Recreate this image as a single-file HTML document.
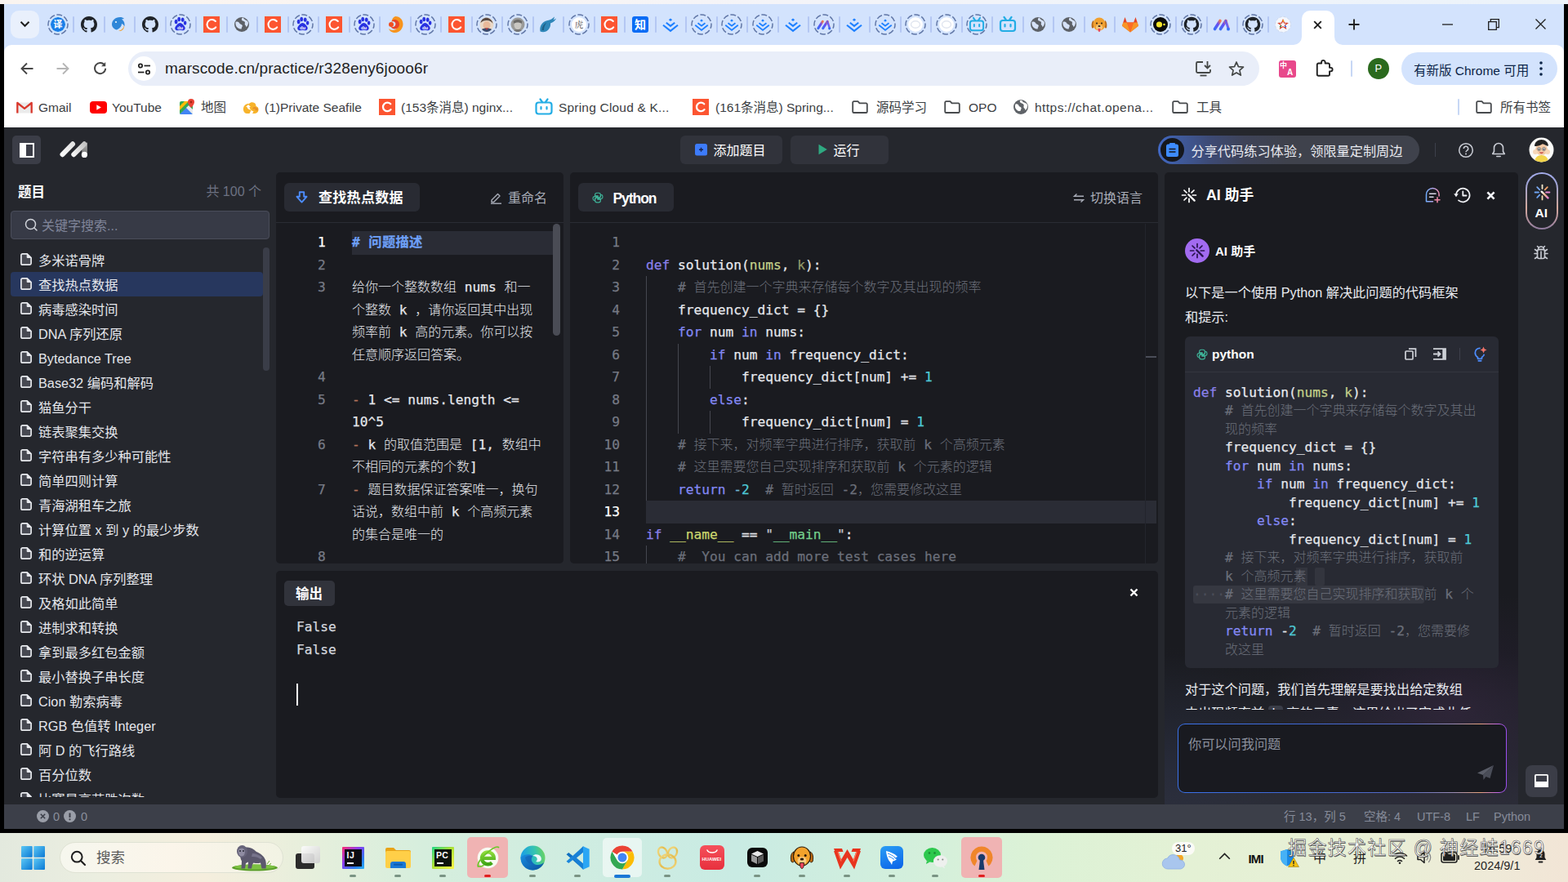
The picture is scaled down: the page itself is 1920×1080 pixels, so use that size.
<!DOCTYPE html>
<html lang="zh-CN"><head><meta charset="utf-8"><title>MarsCode</title>
<style>
*{box-sizing:border-box;margin:0;padding:0}
html,body{width:1920px;height:1080px;overflow:hidden;background:#000}
body{font-family:"Liberation Sans","Noto Sans CJK SC",sans-serif;color:#e4e6eb;-webkit-font-smoothing:antialiased}
#root{position:relative;width:1920px;height:1080px;overflow:hidden;background:#000}
.abs{position:absolute}
.t{position:absolute;white-space:nowrap;line-height:1}
svg{display:block;overflow:visible}
.mono{font-family:"DejaVu Sans Mono","Noto Sans CJK SC",monospace;-webkit-text-stroke:0.25px currentColor}
/* chrome */
#topstrip{left:0;top:0;width:1920px;height:5px;background:linear-gradient(90deg,#f9f4f0 0%,#faf5f2 20%,#f4f4f8 50%,#eff4fa 75%,#ecf3fa 100%)}
#tabbar{left:5px;top:5px;width:1910px;height:62px;background:#d3e3fd}
#toolbar{left:5px;top:55px;width:1910px;height:101px;background:#fff;border-radius:9px 9px 0 0}
#omni{left:157px;top:63px;width:1385px;height:42px;border-radius:21px;background:#e9eef9}
.bm{position:absolute;top:123px;font-size:15.5px;color:#3c4043;white-space:nowrap;line-height:18px}
.tabsep{position:absolute;top:20px;width:2px;height:20px;background:#b4c7f3;border-radius:1px}
/* app */
#app{left:5px;top:156px;width:1910px;height:859px;background:#25272d}
.panel{position:absolute;background:#1a1b20;border-radius:5px}
.li{position:absolute;left:13px;width:309px;height:30px}
.li .tx{position:absolute;left:34px;top:1px;line-height:30px;font-size:16.25px;color:#e4e6eb;white-space:nowrap}
.li svg{position:absolute;left:12px;top:7px}
.ln{position:absolute;text-align:right;color:#767a85;font-size:16.2px;line-height:27.5px}
.cl{position:absolute;white-space:pre;font-size:16.2px;line-height:27.5px;color:#e4e6eb}
.kw{color:#8388f3}.kd{color:#8a80ea}.cm{color:#6b6f7a}.cj{-webkit-text-stroke:0;font-size:16px;font-weight:300}.pa{color:#c3d08a}.nu{color:#4ec9d6}.st{color:#c3d08a}.fn{color:#e8eaf0}
.acl{position:absolute;white-space:pre;font-size:16.2px;line-height:22.5px;color:#e4e6eb}
.guide{position:absolute;width:1px;background:#45474f}

</style></head>
<body>
<div id="root">
<div class="abs" id="topstrip"></div>
<div class="abs" id="tabbar"></div>
<div class="abs" id="toolbar"></div>
<div class="abs" style="left:13px;top:13px;width:35px;height:34px;background:#e9f0fc;border-radius:10px"></div>
<svg class="abs" style="left:24px;top:25px" width="13" height="9" viewBox="0 0 13 9" ><path d="M1.500 1.800L6.500 6.800 11.500 1.800" fill="none" stroke="#1f1f1f" stroke-width="2"/></svg>
<svg class="abs" style="left:58.0px;top:16.5px" width="26" height="26" viewBox="0 0 26 26" ><circle cx="13" cy="13" r="12" fill="none" stroke="#6076a6" stroke-width="1.5" stroke-dasharray="6.9 2.52" stroke-dashoffset="2"/><circle cx="13" cy="13" r="9" fill="#1a7fe8"/><circle cx="13" cy="13" r="9.6" fill="none" stroke="#bfe2ff" stroke-width="1"/><text x="13" y="17" font-size="11" font-weight="700" text-anchor="middle" fill="#fff" font-family="Liberation Sans,Noto Sans CJK SC,sans-serif">译</text></svg>
<div class="tabsep" style="left:89.2px"></div>
<svg class="abs" style="left:95.5px;top:16.5px" width="26" height="26" viewBox="0 0 26 26" ><path transform="translate(3.0,3.0) scale(1.25)" fill="#1f2328" d="M8 0C3.58 0 0 3.58 0 8c0 3.54 2.29 6.53 5.47 7.59.4.07.55-.17.55-.38 0-.19-.01-.82-.01-1.49-2.01.37-2.53-.49-2.69-.94-.09-.23-.48-.94-.82-1.13-.28-.15-.68-.52-.01-.53.63-.01 1.08.58 1.23.82.72 1.21 1.87.87 2.33.66.07-.52.28-.87.51-1.07-1.78-.2-3.64-.89-3.64-3.95 0-.87.31-1.59.82-2.15-.08-.2-.36-1.02.08-2.12 0 0 .67-.21 2.2.82.64-.18 1.32-.27 2-.27.68 0 1.36.09 2 .27 1.53-1.04 2.2-.82 2.2-.82.44 1.1.16 1.92.08 2.12.51.56.82 1.27.82 2.15 0 3.07-1.87 3.75-3.65 3.95.29.25.54.73.54 1.48 0 1.07-.01 1.93-.01 2.2 0 .21.15.46.55.38A8.013 8.013 0 0016 8c0-4.42-3.58-8-8-8z"/></svg>
<div class="tabsep" style="left:126.7px"></div>
<svg class="abs" style="left:133.0px;top:16.5px" width="26" height="26" viewBox="0 0 26 26" ><path d="M4 13c0-5 4-9 10-9 2 0 3.500 0.500 5 2l-3 0.500c3 2 4 5 3.500 9-1-2-2-3-3.500-3.500 0 3-2 6-6 7.500-3-0.500-6-3-6-7z" fill="#2f86d8"/><path d="M12 21c4-1 6.500-3.500 7-7 0.500 4-2 7.500-7 7z" fill="#f39a1e"/><circle cx="9" cy="10" r="1" fill="#fff"/></svg>
<div class="tabsep" style="left:164.2px"></div>
<svg class="abs" style="left:170.5px;top:16.5px" width="26" height="26" viewBox="0 0 26 26" ><path transform="translate(3.0,3.0) scale(1.25)" fill="#1f2328" d="M8 0C3.58 0 0 3.58 0 8c0 3.54 2.29 6.53 5.47 7.59.4.07.55-.17.55-.38 0-.19-.01-.82-.01-1.49-2.01.37-2.53-.49-2.69-.94-.09-.23-.48-.94-.82-1.13-.28-.15-.68-.52-.01-.53.63-.01 1.08.58 1.23.82.72 1.21 1.87.87 2.33.66.07-.52.28-.87.51-1.07-1.78-.2-3.64-.89-3.64-3.95 0-.87.31-1.59.82-2.15-.08-.2-.36-1.02.08-2.12 0 0 .67-.21 2.2.82.64-.18 1.32-.27 2-.27.68 0 1.36.09 2 .27 1.53-1.04 2.2-.82 2.2-.82.44 1.1.16 1.92.08 2.12.51.56.82 1.27.82 2.15 0 3.07-1.87 3.75-3.65 3.95.29.25.54.73.54 1.48 0 1.07-.01 1.93-.01 2.2 0 .21.15.46.55.38A8.013 8.013 0 0016 8c0-4.42-3.58-8-8-8z"/></svg>
<div class="tabsep" style="left:201.7px"></div>
<svg class="abs" style="left:208.0px;top:16.5px" width="26" height="26" viewBox="0 0 26 26" ><circle cx="13" cy="13" r="12" fill="none" stroke="#6076a6" stroke-width="1.5" stroke-dasharray="6.9 2.52" stroke-dashoffset="2"/><g transform="translate(13,13.300) scale(1.280) translate(-13.400,-13.300)"><ellipse cx="9.200" cy="10.300" rx="1.500" ry="2.100" fill="#2932e1"/><ellipse cx="12" cy="8" rx="1.500" ry="2.100" fill="#2932e1"/><ellipse cx="15.500" cy="8.600" rx="1.500" ry="2.100" fill="#2932e1"/><ellipse cx="17.800" cy="11.600" rx="1.400" ry="2" fill="#2932e1"/><path d="M13 11.500c2 0 3 2 4.200 3.300 1.200 1.200 0.800 3.700-1.200 3.900-1.200 0.100-2-0.300-3-0.300s-1.800 0.400-3 0.300c-2-0.200-2.400-2.700-1.200-3.900C10 13.500 11 11.500 13 11.500z" fill="#2932e1"/><text x="13" y="17.800" font-size="4.600" font-weight="700" text-anchor="middle" fill="#fff" font-family="Liberation Sans,sans-serif">du</text></g></svg>
<div class="tabsep" style="left:239.2px"></div>
<svg class="abs" style="left:245.5px;top:16.5px" width="26" height="26" viewBox="0 0 26 26" ><rect x="3" y="3" width="20" height="20" fill="#fc5531"/><path d="M17.800 9a5.900 5.900 0 1 0 0.400 7.400" fill="none" stroke="#fff" stroke-width="2.100" stroke-linecap="round"/></svg>
<div class="tabsep" style="left:276.7px"></div>
<svg class="abs" style="left:283.0px;top:16.5px" width="26" height="26" viewBox="0 0 26 26" ><circle cx="13" cy="13" r="9" fill="#5d6167"/><path d="M5.500 10c2.500-1 4 0 4.800 1.600 0.700 1.400 2.700 1 3.400 2.400 0.600 1.300-1.200 2.600-1 4.400-2.600 0.300-5.800-1.200-6.900-4.400-0.400-1.400-0.500-2.700-0.300-4zM14 4.600c2 0.800 1.800 2.200 3.600 2.800 1.800 0.600 3 1.600 3.300 3.200 0.300 1.600-0.600 4.300-2.400 5.600 0-1.800-1.300-1.800-1.700-3.100-0.400-1.300 0.900-2.200-0.400-3.500-1.300-1.300-3-0.900-3.400-2.200-0.300-1.100 0.200-2.200 1-2.800z" fill="#d6e2f7"/></svg>
<div class="tabsep" style="left:314.2px"></div>
<svg class="abs" style="left:320.5px;top:16.5px" width="26" height="26" viewBox="0 0 26 26" ><rect x="3" y="3" width="20" height="20" fill="#fc5531"/><path d="M17.800 9a5.900 5.900 0 1 0 0.400 7.400" fill="none" stroke="#fff" stroke-width="2.100" stroke-linecap="round"/></svg>
<div class="tabsep" style="left:351.7px"></div>
<svg class="abs" style="left:358.0px;top:16.5px" width="26" height="26" viewBox="0 0 26 26" ><circle cx="13" cy="13" r="12" fill="none" stroke="#6076a6" stroke-width="1.5" stroke-dasharray="6.9 2.52" stroke-dashoffset="2"/><g transform="translate(13,13.300) scale(1.280) translate(-13.400,-13.300)"><ellipse cx="9.200" cy="10.300" rx="1.500" ry="2.100" fill="#2932e1"/><ellipse cx="12" cy="8" rx="1.500" ry="2.100" fill="#2932e1"/><ellipse cx="15.500" cy="8.600" rx="1.500" ry="2.100" fill="#2932e1"/><ellipse cx="17.800" cy="11.600" rx="1.400" ry="2" fill="#2932e1"/><path d="M13 11.500c2 0 3 2 4.200 3.300 1.200 1.200 0.800 3.700-1.200 3.900-1.200 0.100-2-0.300-3-0.300s-1.800 0.400-3 0.300c-2-0.200-2.400-2.700-1.200-3.900C10 13.500 11 11.500 13 11.500z" fill="#2932e1"/><text x="13" y="17.800" font-size="4.600" font-weight="700" text-anchor="middle" fill="#fff" font-family="Liberation Sans,sans-serif">du</text></g></svg>
<div class="tabsep" style="left:389.2px"></div>
<svg class="abs" style="left:395.5px;top:16.5px" width="26" height="26" viewBox="0 0 26 26" ><rect x="3" y="3" width="20" height="20" fill="#fc5531"/><path d="M17.800 9a5.900 5.900 0 1 0 0.400 7.400" fill="none" stroke="#fff" stroke-width="2.100" stroke-linecap="round"/></svg>
<div class="tabsep" style="left:426.7px"></div>
<svg class="abs" style="left:433.0px;top:16.5px" width="26" height="26" viewBox="0 0 26 26" ><circle cx="13" cy="13" r="12" fill="none" stroke="#6076a6" stroke-width="1.5" stroke-dasharray="6.9 2.52" stroke-dashoffset="2"/><g transform="translate(13,13.300) scale(1.280) translate(-13.400,-13.300)"><ellipse cx="9.200" cy="10.300" rx="1.500" ry="2.100" fill="#2932e1"/><ellipse cx="12" cy="8" rx="1.500" ry="2.100" fill="#2932e1"/><ellipse cx="15.500" cy="8.600" rx="1.500" ry="2.100" fill="#2932e1"/><ellipse cx="17.800" cy="11.600" rx="1.400" ry="2" fill="#2932e1"/><path d="M13 11.500c2 0 3 2 4.200 3.300 1.200 1.200 0.800 3.700-1.200 3.900-1.200 0.100-2-0.300-3-0.300s-1.800 0.400-3 0.300c-2-0.200-2.400-2.700-1.200-3.900C10 13.500 11 11.500 13 11.500z" fill="#2932e1"/><text x="13" y="17.800" font-size="4.600" font-weight="700" text-anchor="middle" fill="#fff" font-family="Liberation Sans,sans-serif">du</text></g></svg>
<div class="tabsep" style="left:464.2px"></div>
<svg class="abs" style="left:470.5px;top:16.5px" width="26" height="26" viewBox="0 0 26 26" ><path d="M13 3c6 0 9.500 4.500 9.500 9.500S18.500 23 13 23c-4 0-7-2-8-5 2 2 5 2.500 7.500 1.500 3.500-1.500 4.500-5.500 2.500-8.500C13.500 8.500 10.500 8 8.500 9.500 9 6 10.500 4 13 3z" fill="#f7941d"/><path d="M12 7c3.500 0 6 2.500 6 5.800s-2.500 5.700-5.500 5.700c-2.500 0-4.500-1.500-5-3.500 1.500 1.200 3.500 1.200 4.800 0 1.500-1.400 1.500-3.800 0-5-1-0.800-2.500-1-3.800-0.200C9 8 10.300 7 12 7z" fill="#e8452c"/><circle cx="8" cy="13" r="3" fill="#f04e23"/></svg>
<div class="tabsep" style="left:501.7px"></div>
<svg class="abs" style="left:508.0px;top:16.5px" width="26" height="26" viewBox="0 0 26 26" ><circle cx="13" cy="13" r="12" fill="none" stroke="#6076a6" stroke-width="1.5" stroke-dasharray="6.9 2.52" stroke-dashoffset="2"/><g transform="translate(13,13.300) scale(1.280) translate(-13.400,-13.300)"><ellipse cx="9.200" cy="10.300" rx="1.500" ry="2.100" fill="#2932e1"/><ellipse cx="12" cy="8" rx="1.500" ry="2.100" fill="#2932e1"/><ellipse cx="15.500" cy="8.600" rx="1.500" ry="2.100" fill="#2932e1"/><ellipse cx="17.800" cy="11.600" rx="1.400" ry="2" fill="#2932e1"/><path d="M13 11.500c2 0 3 2 4.200 3.300 1.200 1.200 0.800 3.700-1.200 3.900-1.200 0.100-2-0.300-3-0.300s-1.800 0.400-3 0.300c-2-0.200-2.400-2.700-1.200-3.900C10 13.500 11 11.500 13 11.500z" fill="#2932e1"/><text x="13" y="17.800" font-size="4.600" font-weight="700" text-anchor="middle" fill="#fff" font-family="Liberation Sans,sans-serif">du</text></g></svg>
<div class="tabsep" style="left:539.2px"></div>
<svg class="abs" style="left:545.5px;top:16.5px" width="26" height="26" viewBox="0 0 26 26" ><rect x="3" y="3" width="20" height="20" fill="#fc5531"/><path d="M17.800 9a5.900 5.900 0 1 0 0.400 7.400" fill="none" stroke="#fff" stroke-width="2.100" stroke-linecap="round"/></svg>
<div class="tabsep" style="left:576.7px"></div>
<svg class="abs" style="left:583.0px;top:16.5px" width="26" height="26" viewBox="0 0 26 26" ><circle cx="13" cy="13" r="12" fill="none" stroke="#6076a6" stroke-width="1.5" stroke-dasharray="6.9 2.52" stroke-dashoffset="2"/><circle cx="13" cy="13" r="8.500" fill="#e9d9c8"/><path d="M5.500 11c1-5 5-7 9-6 3 1 5.500 3 6 7-2-3-4-4-7.500-4s-5.500 1-7.500 3z" fill="#5a4a42"/><ellipse cx="13" cy="14" rx="4.500" ry="5" fill="#e8b99a"/><path d="M7 19c2-2 10-2 12 0-1.500 2-4 3-6 3s-4.500-1-6-3z" fill="#3b4a6b"/><path d="M11 17.500h4l-2 2z" fill="#c33"/></svg>
<div class="tabsep" style="left:614.2px"></div>
<svg class="abs" style="left:620.5px;top:16.5px" width="26" height="26" viewBox="0 0 26 26" ><circle cx="13" cy="13" r="12" fill="none" stroke="#6076a6" stroke-width="1.5" stroke-dasharray="6.9 2.52" stroke-dashoffset="2"/><circle cx="13" cy="13" r="8.500" fill="#9a9a98"/><ellipse cx="13" cy="13.500" rx="4.500" ry="5.500" fill="#c9c7c2"/><path d="M7.500 9.500c1.500-3.500 9.500-3.500 11 0l-1 2.500c-2-2-7-2-9 0z" fill="#6b6a68"/><path d="M8 20c2-1.500 8-1.500 10 0-1.500 1.500-3 2-5 2s-3.500-0.500-5-2z" fill="#777"/></svg>
<div class="tabsep" style="left:651.7px"></div>
<svg class="abs" style="left:658.0px;top:16.5px" width="26" height="26" viewBox="0 0 26 26" ><path d="M3.500 21.500c-1-5 1-10 6-12.500 3-1.500 6-1 8.500-3 1-0.800 2-2 3-2.500-0.500 1.500-0.500 2.500-1.500 4 1.500-0.500 2.500-1.500 3.500-2-1 3-4 5-7 6 0.500 4-1.500 8-5.500 10-2 1-5 1-7 0z" fill="#2e86b8"/><path d="M5.500 20c0-4 2-7.500 6-9.500-2.500 3-3.500 6-3.500 9.500z" fill="#1d5f86"/></svg>
<div class="tabsep" style="left:689.2px"></div>
<svg class="abs" style="left:695.5px;top:16.5px" width="26" height="26" viewBox="0 0 26 26" ><circle cx="13" cy="13" r="12" fill="none" stroke="#6076a6" stroke-width="1.5" stroke-dasharray="6.9 2.52" stroke-dashoffset="2"/><circle cx="13" cy="13" r="9" fill="#fff"/><text x="13" y="17" font-size="10.500" text-anchor="middle" fill="#444" font-family="Noto Serif CJK SC,serif">虎</text></svg>
<div class="tabsep" style="left:726.7px"></div>
<svg class="abs" style="left:733.0px;top:16.5px" width="26" height="26" viewBox="0 0 26 26" ><rect x="3" y="3" width="20" height="20" fill="#fc5531"/><path d="M17.800 9a5.900 5.900 0 1 0 0.400 7.400" fill="none" stroke="#fff" stroke-width="2.100" stroke-linecap="round"/></svg>
<div class="tabsep" style="left:764.2px"></div>
<svg class="abs" style="left:770.5px;top:16.5px" width="26" height="26" viewBox="0 0 26 26" ><rect x="3" y="3" width="20" height="20" rx="3" fill="#0a6cf5"/><text x="13" y="18.2" font-size="14" font-weight="700" text-anchor="middle" fill="#fff" font-family="Liberation Sans,Noto Sans CJK SC,sans-serif">知</text></svg>
<div class="tabsep" style="left:801.7px"></div>
<svg class="abs" style="left:808.0px;top:16.5px" width="26" height="26" viewBox="0 0 26 26" ><g transform="translate(13,13.5) scale(1.0) translate(-13,-13)" fill="none" stroke="#1e80ff" stroke-width="2.100" stroke-linejoin="miter"><path d="M10.800 6.800L13 5l2.200 1.800L13 8.600z" fill="#1e80ff" stroke="none"/><path d="M7.800 10.300L13 14.400l5.200-4.100"/><path d="M4 13.300l9 7.100 9-7.100"/></g></svg>
<div class="tabsep" style="left:839.2px"></div>
<svg class="abs" style="left:845.5px;top:16.5px" width="26" height="26" viewBox="0 0 26 26" ><circle cx="13" cy="13" r="12" fill="none" stroke="#6076a6" stroke-width="1.5" stroke-dasharray="6.9 2.52" stroke-dashoffset="2"/><g transform="translate(13,13.5) scale(0.86) translate(-13,-13)" fill="none" stroke="#1e80ff" stroke-width="2.100" stroke-linejoin="miter"><path d="M10.800 6.800L13 5l2.200 1.800L13 8.600z" fill="#1e80ff" stroke="none"/><path d="M7.800 10.300L13 14.400l5.200-4.100"/><path d="M4 13.300l9 7.100 9-7.100"/></g></svg>
<div class="tabsep" style="left:876.7px"></div>
<svg class="abs" style="left:883.0px;top:16.5px" width="26" height="26" viewBox="0 0 26 26" ><circle cx="13" cy="13" r="12" fill="none" stroke="#6076a6" stroke-width="1.5" stroke-dasharray="6.9 2.52" stroke-dashoffset="2"/><g transform="translate(13,13.5) scale(0.86) translate(-13,-13)" fill="none" stroke="#1e80ff" stroke-width="2.100" stroke-linejoin="miter"><path d="M10.800 6.800L13 5l2.200 1.800L13 8.600z" fill="#1e80ff" stroke="none"/><path d="M7.800 10.300L13 14.400l5.200-4.100"/><path d="M4 13.300l9 7.100 9-7.100"/></g></svg>
<div class="tabsep" style="left:914.2px"></div>
<svg class="abs" style="left:920.5px;top:16.5px" width="26" height="26" viewBox="0 0 26 26" ><circle cx="13" cy="13" r="12" fill="none" stroke="#6076a6" stroke-width="1.5" stroke-dasharray="6.9 2.52" stroke-dashoffset="2"/><g transform="translate(13,13.5) scale(0.86) translate(-13,-13)" fill="none" stroke="#1e80ff" stroke-width="2.100" stroke-linejoin="miter"><path d="M10.800 6.800L13 5l2.200 1.800L13 8.600z" fill="#1e80ff" stroke="none"/><path d="M7.800 10.300L13 14.400l5.200-4.100"/><path d="M4 13.300l9 7.100 9-7.100"/></g></svg>
<div class="tabsep" style="left:951.7px"></div>
<svg class="abs" style="left:958.0px;top:16.5px" width="26" height="26" viewBox="0 0 26 26" ><g transform="translate(13,13.5) scale(1.0) translate(-13,-13)" fill="none" stroke="#1e80ff" stroke-width="2.100" stroke-linejoin="miter"><path d="M10.800 6.800L13 5l2.200 1.800L13 8.600z" fill="#1e80ff" stroke="none"/><path d="M7.800 10.300L13 14.400l5.200-4.100"/><path d="M4 13.300l9 7.100 9-7.100"/></g></svg>
<div class="tabsep" style="left:989.2px"></div>
<svg class="abs" style="left:995.5px;top:16.5px" width="26" height="26" viewBox="0 0 26 26" ><circle cx="13" cy="13" r="12" fill="none" stroke="#6076a6" stroke-width="1.5" stroke-dasharray="6.9 2.52" stroke-dashoffset="2"/><g transform="translate(13,13) scale(0.84) translate(-13,-13)"><defs><linearGradient id="mcg1008.5" x1="0" y1="1" x2="1" y2="0"><stop offset="0" stop-color="#3b6cf6"/><stop offset="0.600" stop-color="#6a4df2"/><stop offset="1" stop-color="#f27b4d"/></linearGradient></defs><path d="M4.500 18.500L11 8.500" stroke="url(#mcg1008.5)" stroke-width="3.600" stroke-linecap="round"/><path d="M11.500 18.500L18 8.500" stroke="url(#mcg1008.5)" stroke-width="3.600" stroke-linecap="round"/><path d="M18 8.500l3 9" stroke="url(#mcg1008.5)" stroke-width="3" stroke-linecap="round" opacity="0.900"/><circle cx="21" cy="18.700" r="1.900" fill="#2f6bf5"/></g></svg>
<div class="tabsep" style="left:1026.7px"></div>
<svg class="abs" style="left:1033.0px;top:16.5px" width="26" height="26" viewBox="0 0 26 26" ><g transform="translate(13,13.5) scale(1.0) translate(-13,-13)" fill="none" stroke="#1e80ff" stroke-width="2.100" stroke-linejoin="miter"><path d="M10.800 6.800L13 5l2.200 1.800L13 8.600z" fill="#1e80ff" stroke="none"/><path d="M7.800 10.300L13 14.400l5.200-4.100"/><path d="M4 13.300l9 7.100 9-7.100"/></g></svg>
<div class="tabsep" style="left:1064.2px"></div>
<svg class="abs" style="left:1070.5px;top:16.5px" width="26" height="26" viewBox="0 0 26 26" ><circle cx="13" cy="13" r="12" fill="none" stroke="#6076a6" stroke-width="1.5" stroke-dasharray="6.9 2.52" stroke-dashoffset="2"/><g transform="translate(13,13.5) scale(0.86) translate(-13,-13)" fill="none" stroke="#1e80ff" stroke-width="2.100" stroke-linejoin="miter"><path d="M10.800 6.800L13 5l2.200 1.800L13 8.600z" fill="#1e80ff" stroke="none"/><path d="M7.800 10.300L13 14.400l5.200-4.100"/><path d="M4 13.300l9 7.100 9-7.100"/></g></svg>
<div class="tabsep" style="left:1101.7px"></div>
<svg class="abs" style="left:1108.0px;top:16.5px" width="26" height="26" viewBox="0 0 26 26" ><circle cx="13" cy="13" r="12" fill="none" stroke="#6076a6" stroke-width="1.5" stroke-dasharray="6.9 2.52" stroke-dashoffset="2"/><circle cx="13" cy="13" r="9" fill="#fff"/><ellipse cx="13" cy="13" rx="5.500" ry="4.200" fill="none" stroke="#e1e6f0" stroke-width="1.400"/></svg>
<div class="tabsep" style="left:1139.2px"></div>
<svg class="abs" style="left:1145.5px;top:16.5px" width="26" height="26" viewBox="0 0 26 26" ><circle cx="13" cy="13" r="12" fill="none" stroke="#6076a6" stroke-width="1.5" stroke-dasharray="6.9 2.52" stroke-dashoffset="2"/><circle cx="13" cy="13" r="9" fill="#fff"/><ellipse cx="13" cy="13" rx="5.500" ry="4.200" fill="none" stroke="#e1e6f0" stroke-width="1.400"/></svg>
<div class="tabsep" style="left:1176.7px"></div>
<svg class="abs" style="left:1183.0px;top:16.5px" width="26" height="26" viewBox="0 0 26 26" ><circle cx="13" cy="13" r="12" fill="none" stroke="#6076a6" stroke-width="1.5" stroke-dasharray="6.9 2.52" stroke-dashoffset="2"/><g transform="translate(13,13) scale(0.9) translate(-13,-13)" fill="none" stroke="#23ade5" stroke-width="2.200" stroke-linecap="round" stroke-linejoin="round"><rect x="4" y="8" width="18" height="13" rx="3"/><path d="M8.500 4l2.500 3.500M17.500 4L15 7.500"/><path d="M9.500 13v2.500M16.500 13v2.500"/></g></svg>
<div class="tabsep" style="left:1214.2px"></div>
<svg class="abs" style="left:1220.5px;top:16.5px" width="26" height="26" viewBox="0 0 26 26" ><g transform="translate(13,13) scale(1.0) translate(-13,-13)" fill="none" stroke="#23ade5" stroke-width="2.200" stroke-linecap="round" stroke-linejoin="round"><rect x="4" y="8" width="18" height="13" rx="3"/><path d="M8.500 4l2.500 3.500M17.500 4L15 7.500"/><path d="M9.500 13v2.500M16.500 13v2.500"/></g></svg>
<div class="tabsep" style="left:1251.7px"></div>
<svg class="abs" style="left:1258.0px;top:16.5px" width="26" height="26" viewBox="0 0 26 26" ><circle cx="13" cy="13" r="9" fill="#5d6167"/><path d="M5.500 10c2.500-1 4 0 4.800 1.600 0.700 1.400 2.700 1 3.400 2.400 0.600 1.300-1.200 2.600-1 4.400-2.600 0.300-5.800-1.200-6.900-4.400-0.400-1.400-0.500-2.700-0.300-4zM14 4.600c2 0.800 1.800 2.200 3.600 2.800 1.800 0.600 3 1.600 3.300 3.200 0.300 1.600-0.600 4.300-2.400 5.600 0-1.800-1.300-1.800-1.700-3.100-0.400-1.300 0.900-2.200-0.400-3.500-1.300-1.300-3-0.900-3.400-2.200-0.300-1.100 0.200-2.200 1-2.800z" fill="#d6e2f7"/></svg>
<div class="tabsep" style="left:1289.2px"></div>
<svg class="abs" style="left:1295.5px;top:16.5px" width="26" height="26" viewBox="0 0 26 26" ><circle cx="13" cy="13" r="9" fill="#5d6167"/><path d="M5.500 10c2.500-1 4 0 4.800 1.600 0.700 1.400 2.700 1 3.400 2.400 0.600 1.300-1.200 2.600-1 4.400-2.600 0.300-5.800-1.200-6.900-4.400-0.400-1.400-0.500-2.700-0.300-4zM14 4.600c2 0.800 1.800 2.200 3.600 2.800 1.800 0.600 3 1.600 3.300 3.200 0.300 1.600-0.600 4.300-2.400 5.600 0-1.800-1.300-1.800-1.700-3.100-0.400-1.300 0.900-2.200-0.400-3.500-1.300-1.300-3-0.900-3.400-2.200-0.300-1.100 0.200-2.200 1-2.800z" fill="#d6e2f7"/></svg>
<div class="tabsep" style="left:1326.7px"></div>
<svg class="abs" style="left:1333.0px;top:16.5px" width="26" height="26" viewBox="0 0 26 26" ><path d="M6 8c-2 1-3 5-2 9 1 1 2 0.500 2.500-1zM20 8c2 1 3 5 2 9-1 1-2 0.500-2.500-1z" fill="#b86a1c"/><ellipse cx="13" cy="12.500" rx="7.500" ry="8" fill="#f0a030"/><ellipse cx="13" cy="16.500" rx="4" ry="3.500" fill="#f7c77a"/><circle cx="10" cy="11.500" r="1.100" fill="#3a2a1a"/><circle cx="16" cy="11.500" r="1.100" fill="#3a2a1a"/><ellipse cx="13" cy="15" rx="1.600" ry="1.100" fill="#3a2a1a"/><path d="M11.500 18h3c0 2.500-0.500 4-1.500 4s-1.500-1.500-1.500-4z" fill="#e8435a"/></svg>
<div class="tabsep" style="left:1364.2px"></div>
<svg class="abs" style="left:1370.5px;top:16.5px" width="26" height="26" viewBox="0 0 26 26" ><path d="M13 22.500L3 14.700 4.300 10.500 6.500 4l2.400 6.500h8.200L19.500 4l2.200 6.500 1.300 4.200z" fill="#e24329"/><path d="M13 22.500L8.900 10.500h8.200z" fill="#fc6d26"/><path d="M13 22.500L3 14.700l1.300-4.200h4.600z" fill="#fca326" opacity="0.850"/><path d="M13 22.500l10-7.800-1.300-4.200h-4.600z" fill="#fca326" opacity="0.850"/></svg>
<div class="tabsep" style="left:1401.7px"></div>
<svg class="abs" style="left:1408.0px;top:16.5px" width="26" height="26" viewBox="0 0 26 26" ><circle cx="13" cy="13" r="12" fill="none" stroke="#6076a6" stroke-width="1.5" stroke-dasharray="6.9 2.52" stroke-dashoffset="2"/><circle cx="13" cy="13" r="9" fill="#0a0a0a"/><circle cx="11.500" cy="13" r="3.600" fill="#f5e52a"/><circle cx="17.500" cy="13" r="1.300" fill="#f5e52a"/></svg>
<div class="tabsep" style="left:1439.2px"></div>
<svg class="abs" style="left:1445.5px;top:16.5px" width="26" height="26" viewBox="0 0 26 26" ><circle cx="13" cy="13" r="12" fill="none" stroke="#6076a6" stroke-width="1.5" stroke-dasharray="6.9 2.52" stroke-dashoffset="2"/><path transform="translate(3.75,3.75) scale(1.15625)" fill="#1f2328" d="M8 0C3.58 0 0 3.58 0 8c0 3.54 2.29 6.53 5.47 7.59.4.07.55-.17.55-.38 0-.19-.01-.82-.01-1.49-2.01.37-2.53-.49-2.69-.94-.09-.23-.48-.94-.82-1.13-.28-.15-.68-.52-.01-.53.63-.01 1.08.58 1.23.82.72 1.21 1.87.87 2.33.66.07-.52.28-.87.51-1.07-1.78-.2-3.64-.89-3.64-3.95 0-.87.31-1.59.82-2.15-.08-.2-.36-1.02.08-2.12 0 0 .67-.21 2.2.82.64-.18 1.32-.27 2-.27.68 0 1.36.09 2 .27 1.53-1.04 2.2-.82 2.2-.82.44 1.1.16 1.92.08 2.12.51.56.82 1.27.82 2.15 0 3.07-1.87 3.75-3.65 3.95.29.25.54.73.54 1.48 0 1.07-.01 1.93-.01 2.2 0 .21.15.46.55.38A8.013 8.013 0 0016 8c0-4.42-3.58-8-8-8z"/></svg>
<div class="tabsep" style="left:1476.7px"></div>
<svg class="abs" style="left:1483.0px;top:16.5px" width="26" height="26" viewBox="0 0 26 26" ><g transform="translate(13,13) scale(1.0) translate(-13,-13)"><defs><linearGradient id="mcg1496.0" x1="0" y1="1" x2="1" y2="0"><stop offset="0" stop-color="#3b6cf6"/><stop offset="0.600" stop-color="#6a4df2"/><stop offset="1" stop-color="#f27b4d"/></linearGradient></defs><path d="M4.500 18.500L11 8.500" stroke="url(#mcg1496.0)" stroke-width="3.600" stroke-linecap="round"/><path d="M11.500 18.500L18 8.500" stroke="url(#mcg1496.0)" stroke-width="3.600" stroke-linecap="round"/><path d="M18 8.500l3 9" stroke="url(#mcg1496.0)" stroke-width="3" stroke-linecap="round" opacity="0.900"/><circle cx="21" cy="18.700" r="1.900" fill="#2f6bf5"/></g></svg>
<div class="tabsep" style="left:1514.2px"></div>
<svg class="abs" style="left:1520.5px;top:16.5px" width="26" height="26" viewBox="0 0 26 26" ><circle cx="13" cy="13" r="12" fill="none" stroke="#6076a6" stroke-width="1.5" stroke-dasharray="6.9 2.52" stroke-dashoffset="2"/><path transform="translate(3.75,3.75) scale(1.15625)" fill="#1f2328" d="M8 0C3.58 0 0 3.58 0 8c0 3.54 2.29 6.53 5.47 7.59.4.07.55-.17.55-.38 0-.19-.01-.82-.01-1.49-2.01.37-2.53-.49-2.69-.94-.09-.23-.48-.94-.82-1.13-.28-.15-.68-.52-.01-.53.63-.01 1.08.58 1.23.82.72 1.21 1.87.87 2.33.66.07-.52.28-.87.51-1.07-1.78-.2-3.64-.89-3.64-3.95 0-.87.31-1.59.82-2.15-.08-.2-.36-1.02.08-2.12 0 0 .67-.21 2.2.82.64-.18 1.32-.27 2-.27.68 0 1.36.09 2 .27 1.53-1.04 2.2-.82 2.2-.82.44 1.1.16 1.92.08 2.12.51.56.82 1.27.82 2.15 0 3.07-1.87 3.75-3.65 3.95.29.25.54.73.54 1.48 0 1.07-.01 1.93-.01 2.2 0 .21.15.46.55.38A8.013 8.013 0 0016 8c0-4.42-3.58-8-8-8z"/></svg>
<div class="tabsep" style="left:1551.7px"></div>
<svg class="abs" style="left:1558.0px;top:16.5px" width="26" height="26" viewBox="0 0 26 26" ><circle cx="13" cy="13" r="9.500" fill="#f4f7fd"/><circle cx="13" cy="13" r="9.500" fill="none" stroke="#c9d3e6" stroke-width="0.800" stroke-dasharray="3 2"/><path d="M13 7.500l1.500 3.600 3.900 0.300-3 2.500 1 3.800L13 15.600l-3.400 2.100 1-3.800-3-2.500 3.900-0.300z" fill="none" stroke="#d8452f" stroke-width="1.200"/><path d="M9 16l2-1.500" stroke="#2a9d4a" stroke-width="1.400"/><path d="M17 16l-2-1.500" stroke="#2f6bf5" stroke-width="1.400"/><path d="M13 7.500l0.800 2" stroke="#f2b21d" stroke-width="1.400"/></svg>
<div class="abs" style="left:1594px;top:13px;width:40px;height:42px;background:#fff;border-radius:10px 10px 0 0"></div>
<svg class="abs" style="left:1584px;top:45px" width="10" height="10" viewBox="0 0 10 10" ><path d="M10 0v10H0A10 10 0 0 0 10 0z" fill="#fff"/></svg>
<svg class="abs" style="left:1634px;top:45px" width="10" height="10" viewBox="0 0 10 10" ><path d="M0 0v10h10A10 10 0 0 1 0 0z" fill="#fff"/></svg>
<svg class="abs" style="left:1608px;top:25px" width="11" height="11" viewBox="0 0 11 11" ><path d="M1.200 1.200l8.600 8.600M9.800 1.200l-8.600 8.600" stroke="#1f1f1f" stroke-width="1.900"/></svg>
<svg class="abs" style="left:1651px;top:23px" width="14" height="14" viewBox="0 0 14 14" ><path d="M7 0.500v13M0.500 7h13" stroke="#1f1f1f" stroke-width="1.900"/></svg>
<svg class="abs" style="left:1766px;top:29px" width="13" height="2" viewBox="0 0 13 2" ><path d="M0 1h13" stroke="#1f1f1f" stroke-width="1.300"/></svg>
<svg class="abs" style="left:1822px;top:23px" width="14" height="14" viewBox="0 0 14 14" ><path d="M0.700 3.700h9.600v9.600h-9.600z" fill="none" stroke="#1f1f1f" stroke-width="1.300"/><path d="M3.300 3.500v-2.800h10v10h-2.800" fill="none" stroke="#1f1f1f" stroke-width="1.300"/></svg>
<svg class="abs" style="left:1880px;top:23px" width="13" height="13" viewBox="0 0 13 13" ><path d="M0.500 0.500l12 12M12.500 0.500l-12 12" stroke="#1f1f1f" stroke-width="1.300"/></svg>
<svg class="abs" style="left:25px;top:76px" width="16" height="16" viewBox="0 0 16 16" ><path d="M15.500 8H2M8 1.500L1.500 8 8 14.500" fill="none" stroke="#474747" stroke-width="1.900"/></svg>
<svg class="abs" style="left:69px;top:76px" width="16" height="16" viewBox="0 0 16 16" ><path d="M0.500 8H14M8 1.500L14.500 8 8 14.500" fill="none" stroke="#b5b5b5" stroke-width="1.900"/></svg>
<svg class="abs" style="left:114px;top:75px" width="17" height="17" viewBox="0 0 17 17" ><path d="M14.300 5.200A6.600 6.600 0 1 0 15.200 8.700" fill="none" stroke="#474747" stroke-width="1.900"/><path d="M15.200 1v5.200H10z" fill="#474747"/></svg>
<div class="abs" id="omni"></div>
<div class="abs" style="left:161px;top:69px;width:30px;height:30px;background:#fff;border-radius:15px"></div>
<svg class="abs" style="left:168px;top:77px" width="17" height="15" viewBox="0 0 17 15" ><circle cx="4" cy="3.500" r="2.200" fill="none" stroke="#1f1f1f" stroke-width="1.700"/><path d="M8.500 3.500H16" stroke="#1f1f1f" stroke-width="1.700"/><circle cx="13" cy="11.500" r="2.200" fill="none" stroke="#1f1f1f" stroke-width="1.700"/><path d="M1 11.500H8.500" stroke="#1f1f1f" stroke-width="1.700"/></svg>
<div class="t url" style="left:202px;top:70.7px;font-size:19px;line-height:26.6px;color:#1f1f1f;font-weight:400;letter-spacing:0.12px">marscode.cn/practice/r328eny6jooo6r</div>
<svg class="abs" style="left:1463px;top:74px" width="21" height="20" viewBox="0 0 21 20" ><path d="M10 2H3.500A1.500 1.500 0 0 0 2 3.500v10A1.500 1.500 0 0 0 3.500 15H17.500A1.500 1.500 0 0 0 19 13.500V11" fill="none" stroke="#444746" stroke-width="1.800"/><path d="M6.500 18.500h8" stroke="#444746" stroke-width="1.800"/><path d="M15.500 1v8M12 6l3.500 3.500L19 6" fill="none" stroke="#444746" stroke-width="1.800"/></svg>
<svg class="abs" style="left:1504px;top:74px" width="20" height="20" viewBox="0 0 20 20" ><path d="M10 2l2.400 5.600 6.100 0.500-4.600 4 1.400 6L10 14.900 4.700 18.100l1.400-6-4.600-4 6.100-0.500z" fill="none" stroke="#444746" stroke-width="1.700" stroke-linejoin="round"/></svg>
<div class="abs" style="left:1566px;top:74px;width:21px;height:21px;background:#e8488b;border-radius:3px"></div>
<div class="t" style="left:1567px;top:75px;font-size:9px;line-height:10px;color:#fff;font-weight:700">中</div><div class="t" style="left:1576px;top:83px;font-size:10px;line-height:11px;color:#fff;font-weight:700">A</div>
<svg class="abs" style="left:1611px;top:72.5px" width="21.5" height="21.5" viewBox="0 0 24 24" ><path d="M20.500 11H19V7a2 2 0 0 0-2-2h-4V3.500a2.500 2.500 0 0 0-5 0V5H4a2 2 0 0 0-2 2v13a2 2 0 0 0 2 2h13a2 2 0 0 0 2-2v-4h1.500a2.500 2.500 0 0 0 0-5z" fill="none" stroke="#1f1f1f" stroke-width="2.100" stroke-linejoin="round"/></svg>
<div class="abs" style="left:1654px;top:74px;width:2px;height:20px;background:#c7d7f5;border-radius:1px"></div>
<div class="abs" style="left:1675px;top:71px;width:26px;height:26px;background:#2b6a1e;border-radius:13px"></div>
<div class="t" style="left:1683.5px;top:74.9px;font-size:13px;line-height:18.2px;color:#fff;font-weight:400;">P</div>
<div class="abs" style="left:1716px;top:63.5px;width:191px;height:40.5px;background:#d3e3fd;border-radius:20.500px"></div>
<div class="t" style="left:1731px;top:75.7px;font-size:15.5px;line-height:21.7px;color:#0b2347;font-weight:400;">有新版 Chrome 可用</div>
<svg class="abs" style="left:1884px;top:74px" width="6" height="20" viewBox="0 0 6 20" ><circle cx="3" cy="3" r="1.800" fill="#0b2347"/><circle cx="3" cy="10" r="1.800" fill="#0b2347"/><circle cx="3" cy="17" r="1.800" fill="#0b2347"/></svg>
<svg class="abs" style="left:20px;top:124px" width="20" height="15" viewBox="0 0 20 15" ><rect x="1" y="1.500" width="18" height="13" fill="#ebebeb"/><path d="M1.300 14.500V2L10 8.800 18.700 2v12.500" fill="none" stroke="#d9382c" stroke-width="2.300" stroke-linejoin="round"/></svg>
<svg class="abs" style="left:110px;top:124px" width="21" height="15" viewBox="0 0 21 15" ><rect x="0" y="0" width="21" height="15" rx="4" fill="#ff0000"/><path d="M8.300 4.200v6.600l5.600-3.300z" fill="#fff"/></svg>
<svg class="abs" style="left:220px;top:121px" width="19" height="20" viewBox="0 0 19 20" ><rect x="0" y="3" width="16" height="16" rx="2" fill="#34a853"/><path d="M0 19L9 10l7 9z" fill="#4285f4"/><path d="M0 9l6-6h5L0 14z" fill="#fbbc04"/><path d="M16 19L8 11l3-3 5 5z" fill="#e8eaed"/><path d="M14 0a4 4 0 0 1 4 4c0 3-4 7-4 7s-4-4-4-7a4 4 0 0 1 4-4z" fill="#ea4335"/><circle cx="14" cy="4" r="1.400" fill="#a52714"/></svg>
<svg class="abs" style="left:296px;top:123px" width="22" height="17" viewBox="0 0 22 17" ><path d="M2 9.500c0.500-3.500 3.500-6 7-5.500 1.500-2 4.500-2.500 6.500-1 1.500 1 2 2.500 2 4 2 0.500 3.500 2.500 3 5-0.500 2.500-2.500 4-5 4H13l1.500-2.500-3-1.500L9.500 16H6C3.500 16 1.500 13 2 9.500z" fill="#f7b32b"/><path d="M5 8l3-3 3 3H9.500c0 2 1 3 2.500 3.500-2.500 0.500-5-1-5.500-3.500z" fill="#fff"/><path d="M13.500 9c1.500-1.500 4-1 5 0.500l1-1 0.500 4-4-0.500 1-1c-1-1-2.500-1-3.500 0z" fill="#e8912a"/></svg>
<div class="abs" style="left:464px;top:121px;width:20px;height:20px;background:#fc5531"></div>
<svg class="abs" style="left:464px;top:121px" width="20" height="20" viewBox="0 0 20 20" ><path d="M14.200 6.300a5.300 5.300 0 1 0 0.300 6.800" fill="none" stroke="#fff" stroke-width="2.300" stroke-linecap="round"/></svg>
<svg class="abs" style="left:655px;top:120px" width="22" height="21" viewBox="0 0 22 21" ><g fill="none" stroke="#23ade5" stroke-width="2.200" stroke-linecap="round" stroke-linejoin="round"><rect x="1.500" y="5.500" width="19" height="14" rx="3"/><path d="M6.500 1.500l2.500 3.500M15.500 1.500L13 5"/><path d="M7.500 11v2.500M14.500 11v2.500"/></g></svg>
<div class="abs" style="left:848px;top:121px;width:20px;height:20px;background:#fc5531"></div>
<svg class="abs" style="left:848px;top:121px" width="20" height="20" viewBox="0 0 20 20" ><path d="M14.200 6.300a5.300 5.300 0 1 0 0.300 6.800" fill="none" stroke="#fff" stroke-width="2.300" stroke-linecap="round"/></svg>
<svg class="abs" style="left:1043px;top:123px" width="20" height="16" viewBox="0 0 20 16" ><path d="M2.500 1.200h5l2 2.200h8a1.300 1.300 0 0 1 1.300 1.300v9a1.300 1.300 0 0 1-1.300 1.300h-15a1.300 1.300 0 0 1-1.300-1.300v-11.200a1.300 1.300 0 0 1 1.300-1.300z" fill="none" stroke="#474a4d" stroke-width="1.800" stroke-linejoin="round"/></svg>
<svg class="abs" style="left:1156px;top:123px" width="20" height="16" viewBox="0 0 20 16" ><path d="M2.500 1.200h5l2 2.200h8a1.300 1.300 0 0 1 1.300 1.300v9a1.300 1.300 0 0 1-1.300 1.300h-15a1.300 1.300 0 0 1-1.300-1.300v-11.200a1.300 1.300 0 0 1 1.300-1.300z" fill="none" stroke="#474a4d" stroke-width="1.800" stroke-linejoin="round"/></svg>
<svg class="abs" style="left:1240px;top:121px" width="20" height="20" viewBox="0 0 20 20" ><circle cx="10" cy="10" r="9" fill="#5f6368"/><path d="M3.500 6.500c2-0.500 3.500 0.500 4 2 0.500 1.500 2.500 1 3 2.500s-1 2.500-1 4c-3 0.500-6-2-6.500-5 0-1.500 0-2.500 0.500-3.500zM10 1.500c2.500 1 2 2.500 4 3s3.500 1.500 4 3c0.500 2-0.500 5-2.500 6.500 0-2-1.500-2-2-3.500s1-2.500-0.500-4-3.500-1-4-2.500 0-2 1-2.500z" fill="#fff"/></svg>
<svg class="abs" style="left:1435px;top:123px" width="20" height="16" viewBox="0 0 20 16" ><path d="M2.500 1.200h5l2 2.200h8a1.300 1.300 0 0 1 1.300 1.300v9a1.300 1.300 0 0 1-1.300 1.300h-15a1.300 1.300 0 0 1-1.300-1.300v-11.200a1.300 1.300 0 0 1 1.300-1.300z" fill="none" stroke="#474a4d" stroke-width="1.800" stroke-linejoin="round"/></svg>
<div class="abs" style="left:1785px;top:121px;width:2px;height:20px;background:#c7d7f5;border-radius:1px"></div>
<svg class="abs" style="left:1807px;top:123px" width="20" height="16" viewBox="0 0 20 16" ><path d="M2.500 1.200h5l2 2.200h8a1.300 1.300 0 0 1 1.300 1.300v9a1.300 1.300 0 0 1-1.300 1.300h-15a1.300 1.300 0 0 1-1.300-1.300v-11.200a1.300 1.300 0 0 1 1.300-1.300z" fill="none" stroke="#474a4d" stroke-width="1.800" stroke-linejoin="round"/></svg>
<div class="bm" style="left:47px;letter-spacing:0px">Gmail</div>
<div class="bm" style="left:137px;letter-spacing:0px">YouTube</div>
<div class="bm" style="left:246px;letter-spacing:0px">地图</div>
<div class="bm" style="left:324px;letter-spacing:0px">(1)Private Seafile</div>
<div class="bm" style="left:491px;letter-spacing:0px">(153条消息) nginx...</div>
<div class="bm" style="left:684px;letter-spacing:0.2px">Spring Cloud &amp; K...</div>
<div class="bm" style="left:876px;letter-spacing:0px">(161条消息) Spring...</div>
<div class="bm" style="left:1073px;letter-spacing:0px">源码学习</div>
<div class="bm" style="left:1186px;letter-spacing:0px">OPO</div>
<div class="bm" style="left:1267px;letter-spacing:0.45px">https://chat.opena...</div>
<div class="bm" style="left:1465px;letter-spacing:0px">工具</div>
<div class="bm" style="left:1837px;letter-spacing:0px">所有书签</div>
<div class="abs" id="app"></div>
<div class="abs" style="left:15px;top:166px;width:35px;height:35px;background:#3b3d47;border-radius:5px"></div>
<svg class="abs" style="left:24px;top:175px" width="18" height="18" viewBox="0 0 18 18" ><rect x="1" y="1" width="16" height="16" fill="#3b3d47" stroke="#fff" stroke-width="2"/><rect x="0" y="0" width="8" height="18" fill="#fff"/></svg>
<svg class="abs" style="left:70px;top:168px" width="42" height="28" viewBox="0 0 42 28" ><defs><linearGradient id="lg1" x1="0" y1="1" x2="1" y2="0"><stop offset="0" stop-color="#fafafa"/><stop offset="1" stop-color="#e2e2e2"/></linearGradient><linearGradient id="lg3" x1="0" y1="1" x2="1" y2="0"><stop offset="0" stop-color="#f4f4f4"/><stop offset="1" stop-color="#c4c4c4"/></linearGradient><linearGradient id="lg2" x1="0" y1="0" x2="0" y2="1"><stop offset="0" stop-color="#b8b8b8"/><stop offset="1" stop-color="#6e6e6e"/></linearGradient></defs><path d="M30.500 9L36.800 6.500 37 21.500 30 21.500z" fill="url(#lg2)"/><path d="M6.500 21.200L19 8.300" stroke="url(#lg1)" stroke-width="6" stroke-linecap="round"/><path d="M20.300 21.200L33.200 8.300" stroke="url(#lg3)" stroke-width="6" stroke-linecap="round"/><circle cx="33.400" cy="21.400" r="3.600" fill="#fff"/></svg>
<div class="abs" style="left:833px;top:166px;width:125px;height:35px;background:#31333b;border-radius:6px"></div>
<svg class="abs" style="left:851px;top:176px" width="14" height="15" viewBox="0 0 14 15" ><rect x="0" y="0" width="15" height="14.500" rx="2.500" fill="#3d7bfa"/><path d="M7.500 4.700v5M5 7.200h5" stroke="#16244f" stroke-width="1.400"/></svg>
<div class="t" style="left:873.5px;top:173.8px;font-size:16px;line-height:22.4px;color:#fff;font-weight:400;">添加题目</div>
<div class="abs" style="left:968px;top:166px;width:120px;height:35px;background:#31333b;border-radius:6px"></div>
<svg class="abs" style="left:1002px;top:176px" width="12" height="14" viewBox="0 0 12 14" ><path d="M0.500 0.800v12.400L10.800 7z" fill="#2fa981"/></svg>
<div class="t" style="left:1020.5px;top:173.8px;font-size:16px;line-height:22.4px;color:#fff;font-weight:400;">运行</div>
<div class="abs" style="left:1418px;top:166px;width:320px;height:35px;background:linear-gradient(90deg,#4169c6 0%,#3f5a9c 8%,#3d4a74 20%,#3e4358 33%,#3f424c 50%,#3f424c 100%);border-radius:18px"></div>
<div class="abs" style="left:1421px;top:169px;width:29px;height:29px;background:#15171c;border-radius:15px"></div>
<svg class="abs" style="left:1428px;top:175px" width="15" height="17" viewBox="0 0 15 17" ><rect x="0" y="1.500" width="15" height="15.500" rx="2.500" fill="#3d8bff"/><rect x="4" y="0" width="7" height="3.500" rx="1" fill="#3d8bff"/><path d="M3.500 7.500h8M3.500 11h8" stroke="#15171c" stroke-width="1.600"/></svg>
<div class="t" style="left:1458.5px;top:173.7px;font-size:16.2px;line-height:22.7px;color:#e8eaf0;font-weight:400;">分享代码练习体验，领限量定制周边</div>
<div class="abs" style="left:1757px;top:175px;width:1px;height:17px;background:#3d404b"></div>
<svg class="abs" style="left:1785px;top:174px" width="20" height="20" viewBox="0 0 20 20" ><circle cx="10" cy="10" r="8.300" fill="none" stroke="#c9ccd4" stroke-width="1.500"/><path d="M7.300 8a2.700 2.700 0 1 1 4 2.300c-0.900 0.500-1.300 1-1.300 2" fill="none" stroke="#c9ccd4" stroke-width="1.500"/><circle cx="10" cy="14.500" r="1" fill="#c9ccd4"/></svg>
<svg class="abs" style="left:1826px;top:174px" width="18" height="20" viewBox="0 0 18 20" ><path d="M9 1.500a5.500 5.500 0 0 1 5.500 5.500v4.500l1.800 3H1.700l1.800-3V7A5.500 5.500 0 0 1 9 1.500z" fill="none" stroke="#c9ccd4" stroke-width="1.600" stroke-linejoin="round"/><path d="M6.800 17.500h4.400" stroke="#c9ccd4" stroke-width="1.600" stroke-linecap="round"/></svg>
<svg class="abs" style="left:1872px;top:168px" width="31" height="31" viewBox="0 0 31 31" ><defs><clipPath id="avc"><circle cx="15.500" cy="15.500" r="15"/></clipPath></defs><circle cx="15.500" cy="15.500" r="15" fill="#fbfbf8"/><g clip-path="url(#avc)"><path d="M7 11c0-5 4-8 8.500-8s8.500 3 8.500 8c-2-2-4-3-5-3-2 2-6 3-12 3z" fill="#2a2a2a"/><ellipse cx="15.500" cy="15" rx="7.500" ry="7" fill="#f3c9a5"/><path d="M8 11c3 0 7-1 9-3 2 1 4 2 6 3 0-5-3-7-7.500-7S8 6 8 11z" fill="#222"/><circle cx="12.500" cy="14.500" r="2" fill="#fff" stroke="#333" stroke-width="0.600"/><circle cx="18.500" cy="14.500" r="2" fill="#fff" stroke="#333" stroke-width="0.600"/><circle cx="12.500" cy="14.700" r="0.900" fill="#222"/><circle cx="18.500" cy="14.700" r="0.900" fill="#222"/><path d="M13 18.500c1.500 1.500 3.500 1.500 5 0" fill="#c33" stroke="#a22" stroke-width="0.500"/><path d="M7 31c0-6 4-9 8.500-9s8.500 3 8.500 9z" fill="#f2d44a"/><circle cx="8" cy="18" r="3" fill="#f6d7b8"/><circle cx="23" cy="18" r="3" fill="#f6d7b8"/></g></svg>
<div class="t" style="left:22px;top:223.9px;font-size:16.5px;line-height:23.1px;color:#fff;font-weight:700;">题目</div>
<div class="t" style="right:1600px;top:224.3px;font-size:16px;line-height:22.4px;color:#6d7282;font-weight:400;">共 100 个</div>
<div class="abs" style="left:13px;top:258px;width:317px;height:35px;background:#373a46;border:1px solid #4a4d5a;border-radius:4px"></div>
<svg class="abs" style="left:30px;top:267px" width="17" height="17" viewBox="0 0 17 17" ><circle cx="7.500" cy="7.500" r="6" fill="none" stroke="#d0d3da" stroke-width="1.500"/><path d="M12 12l3 3" stroke="#d0d3da" stroke-width="1.500" stroke-linecap="round"/></svg>
<div class="t" style="left:51px;top:265.5px;font-size:16px;line-height:22.4px;color:#80859a;font-weight:400;">关键字搜索...</div>
<div class="abs" style="left:0;top:303px;width:335px;height:673px;overflow:hidden"><div class="li" style="top:0px;"><svg width="14" height="15" viewBox="0 0 14 15"><path d="M2.800 0.900h5.400L13.100 5.500v7A1.700 1.700 0 0 1 11.400 14.100H2.600A1.700 1.700 0 0 1 0.900 12.400V2.600A1.700 1.700 0 0 1 2.600 0.900z" fill="#474952" stroke="#e8eaee" stroke-width="1.700" stroke-linejoin="round"/><path d="M8.200 0.900v4.600h4.900z" fill="#e8eaee" stroke="#e8eaee" stroke-width="1" stroke-linejoin="round"/></svg><span class="tx">多米诺骨牌</span></div><div class="li" style="top:30px;background:#27375e;border-radius:4px;"><svg width="14" height="15" viewBox="0 0 14 15"><path d="M2.800 0.900h5.400L13.100 5.500v7A1.700 1.700 0 0 1 11.400 14.100H2.600A1.700 1.700 0 0 1 0.900 12.400V2.600A1.700 1.700 0 0 1 2.600 0.900z" fill="#474952" stroke="#e8eaee" stroke-width="1.700" stroke-linejoin="round"/><path d="M8.200 0.900v4.600h4.900z" fill="#e8eaee" stroke="#e8eaee" stroke-width="1" stroke-linejoin="round"/></svg><span class="tx">查找热点数据</span></div><div class="li" style="top:60px;"><svg width="14" height="15" viewBox="0 0 14 15"><path d="M2.800 0.900h5.400L13.100 5.500v7A1.700 1.700 0 0 1 11.400 14.100H2.600A1.700 1.700 0 0 1 0.900 12.400V2.600A1.700 1.700 0 0 1 2.600 0.900z" fill="#474952" stroke="#e8eaee" stroke-width="1.700" stroke-linejoin="round"/><path d="M8.200 0.900v4.600h4.900z" fill="#e8eaee" stroke="#e8eaee" stroke-width="1" stroke-linejoin="round"/></svg><span class="tx">病毒感染时间</span></div><div class="li" style="top:90px;"><svg width="14" height="15" viewBox="0 0 14 15"><path d="M2.800 0.900h5.400L13.100 5.500v7A1.700 1.700 0 0 1 11.400 14.100H2.600A1.700 1.700 0 0 1 0.900 12.400V2.600A1.700 1.700 0 0 1 2.600 0.900z" fill="#474952" stroke="#e8eaee" stroke-width="1.700" stroke-linejoin="round"/><path d="M8.200 0.900v4.600h4.900z" fill="#e8eaee" stroke="#e8eaee" stroke-width="1" stroke-linejoin="round"/></svg><span class="tx">DNA 序列还原</span></div><div class="li" style="top:120px;"><svg width="14" height="15" viewBox="0 0 14 15"><path d="M2.800 0.900h5.400L13.100 5.500v7A1.700 1.700 0 0 1 11.400 14.100H2.600A1.700 1.700 0 0 1 0.900 12.400V2.600A1.700 1.700 0 0 1 2.600 0.900z" fill="#474952" stroke="#e8eaee" stroke-width="1.700" stroke-linejoin="round"/><path d="M8.200 0.900v4.600h4.900z" fill="#e8eaee" stroke="#e8eaee" stroke-width="1" stroke-linejoin="round"/></svg><span class="tx">Bytedance Tree</span></div><div class="li" style="top:150px;"><svg width="14" height="15" viewBox="0 0 14 15"><path d="M2.800 0.900h5.400L13.100 5.500v7A1.700 1.700 0 0 1 11.400 14.100H2.600A1.700 1.700 0 0 1 0.900 12.400V2.600A1.700 1.700 0 0 1 2.600 0.900z" fill="#474952" stroke="#e8eaee" stroke-width="1.700" stroke-linejoin="round"/><path d="M8.200 0.900v4.600h4.900z" fill="#e8eaee" stroke="#e8eaee" stroke-width="1" stroke-linejoin="round"/></svg><span class="tx">Base32 编码和解码</span></div><div class="li" style="top:180px;"><svg width="14" height="15" viewBox="0 0 14 15"><path d="M2.800 0.900h5.400L13.100 5.500v7A1.700 1.700 0 0 1 11.400 14.100H2.600A1.700 1.700 0 0 1 0.900 12.400V2.600A1.700 1.700 0 0 1 2.600 0.900z" fill="#474952" stroke="#e8eaee" stroke-width="1.700" stroke-linejoin="round"/><path d="M8.200 0.900v4.600h4.900z" fill="#e8eaee" stroke="#e8eaee" stroke-width="1" stroke-linejoin="round"/></svg><span class="tx">猫鱼分干</span></div><div class="li" style="top:210px;"><svg width="14" height="15" viewBox="0 0 14 15"><path d="M2.800 0.900h5.400L13.100 5.500v7A1.700 1.700 0 0 1 11.400 14.100H2.600A1.700 1.700 0 0 1 0.900 12.400V2.600A1.700 1.700 0 0 1 2.600 0.900z" fill="#474952" stroke="#e8eaee" stroke-width="1.700" stroke-linejoin="round"/><path d="M8.200 0.900v4.600h4.900z" fill="#e8eaee" stroke="#e8eaee" stroke-width="1" stroke-linejoin="round"/></svg><span class="tx">链表聚集交换</span></div><div class="li" style="top:240px;"><svg width="14" height="15" viewBox="0 0 14 15"><path d="M2.800 0.900h5.400L13.100 5.500v7A1.700 1.700 0 0 1 11.400 14.100H2.600A1.700 1.700 0 0 1 0.900 12.400V2.600A1.700 1.700 0 0 1 2.600 0.900z" fill="#474952" stroke="#e8eaee" stroke-width="1.700" stroke-linejoin="round"/><path d="M8.200 0.900v4.600h4.900z" fill="#e8eaee" stroke="#e8eaee" stroke-width="1" stroke-linejoin="round"/></svg><span class="tx">字符串有多少种可能性</span></div><div class="li" style="top:270px;"><svg width="14" height="15" viewBox="0 0 14 15"><path d="M2.800 0.900h5.400L13.100 5.500v7A1.700 1.700 0 0 1 11.400 14.100H2.600A1.700 1.700 0 0 1 0.900 12.400V2.600A1.700 1.700 0 0 1 2.600 0.900z" fill="#474952" stroke="#e8eaee" stroke-width="1.700" stroke-linejoin="round"/><path d="M8.200 0.900v4.600h4.900z" fill="#e8eaee" stroke="#e8eaee" stroke-width="1" stroke-linejoin="round"/></svg><span class="tx">简单四则计算</span></div><div class="li" style="top:300px;"><svg width="14" height="15" viewBox="0 0 14 15"><path d="M2.800 0.900h5.400L13.100 5.500v7A1.700 1.700 0 0 1 11.400 14.100H2.600A1.700 1.700 0 0 1 0.900 12.400V2.600A1.700 1.700 0 0 1 2.600 0.900z" fill="#474952" stroke="#e8eaee" stroke-width="1.700" stroke-linejoin="round"/><path d="M8.200 0.900v4.600h4.900z" fill="#e8eaee" stroke="#e8eaee" stroke-width="1" stroke-linejoin="round"/></svg><span class="tx">青海湖租车之旅</span></div><div class="li" style="top:330px;"><svg width="14" height="15" viewBox="0 0 14 15"><path d="M2.800 0.900h5.400L13.100 5.500v7A1.700 1.700 0 0 1 11.400 14.100H2.600A1.700 1.700 0 0 1 0.900 12.400V2.600A1.700 1.700 0 0 1 2.600 0.900z" fill="#474952" stroke="#e8eaee" stroke-width="1.700" stroke-linejoin="round"/><path d="M8.200 0.900v4.600h4.900z" fill="#e8eaee" stroke="#e8eaee" stroke-width="1" stroke-linejoin="round"/></svg><span class="tx">计算位置 x 到 y 的最少步数</span></div><div class="li" style="top:360px;"><svg width="14" height="15" viewBox="0 0 14 15"><path d="M2.800 0.900h5.400L13.100 5.500v7A1.700 1.700 0 0 1 11.400 14.100H2.600A1.700 1.700 0 0 1 0.900 12.400V2.600A1.700 1.700 0 0 1 2.600 0.900z" fill="#474952" stroke="#e8eaee" stroke-width="1.700" stroke-linejoin="round"/><path d="M8.200 0.900v4.600h4.900z" fill="#e8eaee" stroke="#e8eaee" stroke-width="1" stroke-linejoin="round"/></svg><span class="tx">和的逆运算</span></div><div class="li" style="top:390px;"><svg width="14" height="15" viewBox="0 0 14 15"><path d="M2.800 0.900h5.400L13.100 5.500v7A1.700 1.700 0 0 1 11.400 14.100H2.600A1.700 1.700 0 0 1 0.900 12.400V2.600A1.700 1.700 0 0 1 2.600 0.900z" fill="#474952" stroke="#e8eaee" stroke-width="1.700" stroke-linejoin="round"/><path d="M8.200 0.900v4.600h4.900z" fill="#e8eaee" stroke="#e8eaee" stroke-width="1" stroke-linejoin="round"/></svg><span class="tx">环状 DNA 序列整理</span></div><div class="li" style="top:420px;"><svg width="14" height="15" viewBox="0 0 14 15"><path d="M2.800 0.900h5.400L13.100 5.500v7A1.700 1.700 0 0 1 11.400 14.100H2.600A1.700 1.700 0 0 1 0.900 12.400V2.600A1.700 1.700 0 0 1 2.600 0.900z" fill="#474952" stroke="#e8eaee" stroke-width="1.700" stroke-linejoin="round"/><path d="M8.200 0.900v4.600h4.900z" fill="#e8eaee" stroke="#e8eaee" stroke-width="1" stroke-linejoin="round"/></svg><span class="tx">及格如此简单</span></div><div class="li" style="top:450px;"><svg width="14" height="15" viewBox="0 0 14 15"><path d="M2.800 0.900h5.400L13.100 5.500v7A1.700 1.700 0 0 1 11.400 14.100H2.600A1.700 1.700 0 0 1 0.900 12.400V2.600A1.700 1.700 0 0 1 2.600 0.900z" fill="#474952" stroke="#e8eaee" stroke-width="1.700" stroke-linejoin="round"/><path d="M8.200 0.900v4.600h4.900z" fill="#e8eaee" stroke="#e8eaee" stroke-width="1" stroke-linejoin="round"/></svg><span class="tx">进制求和转换</span></div><div class="li" style="top:480px;"><svg width="14" height="15" viewBox="0 0 14 15"><path d="M2.800 0.900h5.400L13.100 5.500v7A1.700 1.700 0 0 1 11.400 14.100H2.600A1.700 1.700 0 0 1 0.900 12.400V2.600A1.700 1.700 0 0 1 2.600 0.900z" fill="#474952" stroke="#e8eaee" stroke-width="1.700" stroke-linejoin="round"/><path d="M8.200 0.900v4.600h4.900z" fill="#e8eaee" stroke="#e8eaee" stroke-width="1" stroke-linejoin="round"/></svg><span class="tx">拿到最多红包金额</span></div><div class="li" style="top:510px;"><svg width="14" height="15" viewBox="0 0 14 15"><path d="M2.800 0.900h5.400L13.100 5.500v7A1.700 1.700 0 0 1 11.400 14.100H2.600A1.700 1.700 0 0 1 0.900 12.400V2.600A1.700 1.700 0 0 1 2.600 0.900z" fill="#474952" stroke="#e8eaee" stroke-width="1.700" stroke-linejoin="round"/><path d="M8.200 0.900v4.600h4.900z" fill="#e8eaee" stroke="#e8eaee" stroke-width="1" stroke-linejoin="round"/></svg><span class="tx">最小替换子串长度</span></div><div class="li" style="top:540px;"><svg width="14" height="15" viewBox="0 0 14 15"><path d="M2.800 0.900h5.400L13.100 5.500v7A1.700 1.700 0 0 1 11.400 14.100H2.600A1.700 1.700 0 0 1 0.900 12.400V2.600A1.700 1.700 0 0 1 2.600 0.900z" fill="#474952" stroke="#e8eaee" stroke-width="1.700" stroke-linejoin="round"/><path d="M8.200 0.900v4.600h4.900z" fill="#e8eaee" stroke="#e8eaee" stroke-width="1" stroke-linejoin="round"/></svg><span class="tx">Cion 勒索病毒</span></div><div class="li" style="top:570px;"><svg width="14" height="15" viewBox="0 0 14 15"><path d="M2.800 0.900h5.400L13.100 5.500v7A1.700 1.700 0 0 1 11.400 14.100H2.600A1.700 1.700 0 0 1 0.900 12.400V2.600A1.700 1.700 0 0 1 2.600 0.900z" fill="#474952" stroke="#e8eaee" stroke-width="1.700" stroke-linejoin="round"/><path d="M8.200 0.900v4.600h4.900z" fill="#e8eaee" stroke="#e8eaee" stroke-width="1" stroke-linejoin="round"/></svg><span class="tx">RGB 色值转 Integer</span></div><div class="li" style="top:600px;"><svg width="14" height="15" viewBox="0 0 14 15"><path d="M2.800 0.900h5.400L13.100 5.500v7A1.700 1.700 0 0 1 11.400 14.100H2.600A1.700 1.700 0 0 1 0.900 12.400V2.600A1.700 1.700 0 0 1 2.600 0.900z" fill="#474952" stroke="#e8eaee" stroke-width="1.700" stroke-linejoin="round"/><path d="M8.200 0.900v4.600h4.900z" fill="#e8eaee" stroke="#e8eaee" stroke-width="1" stroke-linejoin="round"/></svg><span class="tx">阿 D 的飞行路线</span></div><div class="li" style="top:630px;"><svg width="14" height="15" viewBox="0 0 14 15"><path d="M2.800 0.900h5.400L13.100 5.500v7A1.700 1.700 0 0 1 11.400 14.100H2.600A1.700 1.700 0 0 1 0.900 12.400V2.600A1.700 1.700 0 0 1 2.600 0.900z" fill="#474952" stroke="#e8eaee" stroke-width="1.700" stroke-linejoin="round"/><path d="M8.200 0.900v4.600h4.900z" fill="#e8eaee" stroke="#e8eaee" stroke-width="1" stroke-linejoin="round"/></svg><span class="tx">百分位数</span></div><div class="li" style="top:660px;"><svg width="14" height="15" viewBox="0 0 14 15"><path d="M2.800 0.900h5.400L13.100 5.500v7A1.700 1.700 0 0 1 11.400 14.100H2.600A1.700 1.700 0 0 1 0.900 12.400V2.600A1.700 1.700 0 0 1 2.600 0.900z" fill="#474952" stroke="#e8eaee" stroke-width="1.700" stroke-linejoin="round"/><path d="M8.200 0.900v4.600h4.900z" fill="#e8eaee" stroke="#e8eaee" stroke-width="1" stroke-linejoin="round"/></svg><span class="tx">比赛最高获胜次数</span></div></div>
<div class="abs" style="left:322px;top:303px;width:8px;height:151px;background:#3a3d48;border-radius:4px"></div>
<div class="panel" style="left:338px;top:211px;width:352px;height:479px;overflow:hidden">
</div>
<div class="abs" style="left:348px;top:224px;width:166px;height:35px;background:#292b33;border-radius:6px"></div>
<svg class="abs" style="left:362px;top:234px" width="15" height="15" viewBox="0 0 15 15" ><path d="M4.800 1.200h5.400v5.600h3.300L7.500 13.600 1.500 6.800h3.300z" fill="none" stroke="#4d8dff" stroke-width="1.900" stroke-linejoin="round"/></svg>
<div class="t" style="left:390px;top:231.1px;font-size:17px;line-height:23.8px;color:#fff;font-weight:700;letter-spacing:0.3px">查找热点数据</div>
<svg class="abs" style="left:600px;top:234px" width="15" height="16" viewBox="0 0 15 16" ><path d="M2 11l7.500-7.500 2.500 2.500L4.500 13.500H2z" fill="none" stroke="#a9adb8" stroke-width="1.400" stroke-linejoin="round"/><path d="M1 15.200h13" stroke="#a9adb8" stroke-width="1.400"/></svg>
<div class="t" style="left:622px;top:231.8px;font-size:16px;line-height:22.4px;color:#a9adb8;font-weight:400;">重命名</div>
<div class="abs" style="left:338px;top:272px;width:352px;height:1px;background:#2a2c34"></div>
<div class="abs" style="left:338px;top:274px;width:352px;height:416px;overflow:hidden;border-radius:0 0 5px 5px"><div class="abs" style="left:93px;top:9px;width:254px;height:29px;background:#2a2c35"></div><div class="ln mono" style="left:28.800px;top:9.0px;width:32px;color:#fff">1</div><div class="cl mono" style="left:93px;top:9.0px;color:#6ea0f7;font-weight:700;letter-spacing:0.4px"># 问题描述</div><div class="ln mono" style="left:28.800px;top:36.5px;width:32px;color:#767a85">2</div><div class="ln mono" style="left:28.800px;top:64.0px;width:32px;color:#767a85">3</div><div class="cl mono" style="left:93px;top:64.0px"><span class="cj">给你一个整数数组</span> nums <span class="cj">和一</span></div><div class="cl mono" style="left:93px;top:91.5px"><span class="cj">个整数</span> k <span class="cj">，请你返回其中出现</span></div><div class="cl mono" style="left:93px;top:119.0px"><span class="cj">频率前</span> k <span class="cj">高的元素。你可以按</span></div><div class="cl mono" style="left:93px;top:146.5px"><span class="cj">任意顺序返回答案。</span></div><div class="ln mono" style="left:28.800px;top:174.0px;width:32px;color:#767a85">4</div><div class="ln mono" style="left:28.800px;top:201.5px;width:32px;color:#767a85">5</div><div class="cl mono" style="left:93px;top:201.5px"><span style="color:#b5745c">-</span> 1 &lt;= nums.length &lt;=</div><div class="cl mono" style="left:93px;top:229.0px">10^5</div><div class="ln mono" style="left:28.800px;top:256.5px;width:32px;color:#767a85">6</div><div class="cl mono" style="left:93px;top:256.5px"><span style="color:#b5745c">-</span> k <span class="cj">的取值范围是</span> [1, <span class="cj">数组中</span></div><div class="cl mono" style="left:93px;top:284.0px"><span class="cj">不相同的元素的个数</span>]</div><div class="ln mono" style="left:28.800px;top:311.5px;width:32px;color:#767a85">7</div><div class="cl mono" style="left:93px;top:311.5px"><span style="color:#b5745c">-</span> <span class="cj">题目数据保证答案唯一，换句</span></div><div class="cl mono" style="left:93px;top:339.0px"><span class="cj">话说，数组中前</span> k <span class="cj">个高频元素</span></div><div class="cl mono" style="left:93px;top:366.5px"><span class="cj">的集合是唯一的</span></div><div class="ln mono" style="left:28.800px;top:394.0px;width:32px;color:#767a85">8</div></div>
<div class="abs" style="left:677px;top:274px;width:9px;height:137px;background:#4a4c55;border-radius:4.500px"></div>
<div class="panel" style="left:698px;top:211px;width:720px;height:479px"></div>
<div class="abs" style="left:708px;top:224px;width:117px;height:35px;background:#292b33;border-radius:6px"></div>
<svg class="abs" style="left:725px;top:235px" width="14" height="14" viewBox="0 0 14 14" ><g fill="none" stroke="#3fb59a" stroke-width="1.150" stroke-linejoin="round"><path d="M6.900 1.200H6A2.400 2.400 0 0 0 3.600 3.600V4.800H7.200V5.600H2.900A1.800 1.800 0 0 0 1.100 7.400V8.600A1.800 1.800 0 0 0 2.900 10.400H3.600V8.700A1.900 1.900 0 0 1 5.500 6.800H8.500A1.900 1.900 0 0 0 10.400 4.900V3.600A2.400 2.400 0 0 0 8 1.200z"/><path d="M6.900 1.200H6A2.400 2.400 0 0 0 3.600 3.600V4.800H7.200V5.600H2.900A1.800 1.800 0 0 0 1.100 7.400V8.600A1.800 1.800 0 0 0 2.900 10.400H3.600V8.700A1.900 1.900 0 0 1 5.500 6.800H8.500A1.900 1.900 0 0 0 10.400 4.900V3.600A2.400 2.400 0 0 0 8 1.200z" transform="rotate(180 7 7)"/></g></svg>
<div class="t" style="left:750.5px;top:230.8px;font-size:17.5px;line-height:24.5px;color:#fff;font-weight:700;letter-spacing:-1.050px">Python</div>
<svg class="abs" style="left:1314px;top:237px" width="14" height="11" viewBox="0 0 14 11" ><path d="M13 3.200H1.500L4.500 0.500" fill="none" stroke="#a9adb8" stroke-width="1.400"/><path d="M1 7.800h11.500L9.500 10.500" fill="none" stroke="#a9adb8" stroke-width="1.400"/></svg>
<div class="t" style="left:1335px;top:231.8px;font-size:16px;line-height:22.4px;color:#a9adb8;font-weight:400;">切换语言</div>
<div class="abs" style="left:698px;top:272px;width:720px;height:1px;background:#2a2c34"></div>
<div class="abs" style="left:698px;top:274px;width:720px;height:416px;overflow:hidden;border-radius:0 0 5px 5px"><div class="abs" style="left:93px;top:339px;width:625px;height:28px;background:#2a2c35"></div><div class="ln mono" style="left:19px;top:9.0px;width:42px;color:#767a85">1</div><div class="ln mono" style="left:19px;top:36.5px;width:42px;color:#767a85">2</div><div class="cl mono" style="left:93px;top:36.5px"><span class="kd">def</span> <span class="fn">solution</span>(<span class="pa">nums</span>, <span style="color:#939a6a">k</span>):</div><div class="ln mono" style="left:19px;top:64.0px;width:42px;color:#767a85">3</div><div class="cl mono" style="left:93px;top:64.0px">    <span class="cm"># <span class="cj">首先创建一个字典来存储每个数字及其出现的频率</span></span></div><div class="ln mono" style="left:19px;top:91.5px;width:42px;color:#767a85">4</div><div class="cl mono" style="left:93px;top:91.5px">    frequency_dict = {}</div><div class="ln mono" style="left:19px;top:119.0px;width:42px;color:#767a85">5</div><div class="cl mono" style="left:93px;top:119.0px">    <span class="kw">for</span> num <span class="kw">in</span> nums:</div><div class="ln mono" style="left:19px;top:146.5px;width:42px;color:#767a85">6</div><div class="cl mono" style="left:93px;top:146.5px">        <span class="kw">if</span> num <span class="kw">in</span> frequency_dict:</div><div class="ln mono" style="left:19px;top:174.0px;width:42px;color:#767a85">7</div><div class="cl mono" style="left:93px;top:174.0px">            frequency_dict[num] += <span class="nu">1</span></div><div class="ln mono" style="left:19px;top:201.5px;width:42px;color:#767a85">8</div><div class="cl mono" style="left:93px;top:201.5px">        <span class="kw">else</span>:</div><div class="ln mono" style="left:19px;top:229.0px;width:42px;color:#767a85">9</div><div class="cl mono" style="left:93px;top:229.0px">            frequency_dict[num] = <span class="nu">1</span></div><div class="ln mono" style="left:19px;top:256.5px;width:42px;color:#767a85">10</div><div class="cl mono" style="left:93px;top:256.5px">    <span class="cm"># <span class="cj">接下来，对频率字典进行排序，获取前</span> k <span class="cj">个高频元素</span></span></div><div class="ln mono" style="left:19px;top:284.0px;width:42px;color:#767a85">11</div><div class="cl mono" style="left:93px;top:284.0px">    <span class="cm"># <span class="cj">这里需要您自己实现排序和获取前</span> k <span class="cj">个元素的逻辑</span></span></div><div class="ln mono" style="left:19px;top:311.5px;width:42px;color:#767a85">12</div><div class="cl mono" style="left:93px;top:311.5px">    <span class="kw">return</span> <span style="color:#6fb4d0">-</span><span class="nu">2</span>  <span class="cm"># <span class="cj">暂时返回</span> -2<span class="cj">，您需要修改这里</span></span></div><div class="ln mono" style="left:19px;top:339.0px;width:42px;color:#fff">13</div><div class="ln mono" style="left:19px;top:366.5px;width:42px;color:#767a85">14</div><div class="cl mono" style="left:93px;top:366.5px"><span class="kd">if</span> <span style="color:#cbd66e">__name__</span> == <span style="color:#c3c7cf">"</span><span style="color:#74cf8c">__main__</span><span style="color:#c3c7cf">"</span>:</div><div class="ln mono" style="left:19px;top:394.0px;width:42px;color:#767a85">15</div><div class="cl mono" style="left:93px;top:394.0px">    <span class="cm">#  You can add more test cases here</span></div><div class="guide" style="left:93px;top:64px;height:275px"></div><div class="guide" style="left:132px;top:147px;height:110px"></div><div class="guide" style="left:171px;top:174px;height:28px"></div><div class="guide" style="left:171px;top:229px;height:28px"></div><div class="guide" style="left:93px;top:394px;height:22px"></div><div class="abs" style="left:704px;top:0px;width:1px;height:416px;background:#23252c"></div><div class="abs" style="left:705px;top:162px;width:13px;height:2px;background:#4a4d58"></div></div>
<div class="panel" style="left:338px;top:699px;width:1080px;height:277.500px"></div>
<div class="abs" style="left:348px;top:710.5px;width:62px;height:31px;background:#31333b;border-radius:5px"></div>
<div class="t" style="left:362px;top:716.0px;font-size:16.5px;line-height:23.1px;color:#fff;font-weight:700;">输出</div>
<svg class="abs" style="left:1383px;top:720px" width="11" height="11" viewBox="0 0 11 11" ><path d="M1.500 1.500l8 8M9.500 1.500l-8 8" stroke="#fff" stroke-width="2.400"/></svg>
<div class="t mono" style="left:363px;top:756px;font-size:16.2px;line-height:24px;color:#d4d7de">False</div>
<div class="t mono" style="left:363px;top:784px;font-size:16.2px;line-height:24px;color:#d4d7de">False</div>
<div class="abs" style="left:363px;top:837px;width:2px;height:27px;background:#fff"></div>
<div class="panel" style="left:1426px;top:211px;width:433px;height:773.500px;border-radius:5px 5px 0 0;background:radial-gradient(ellipse 230px 150px at 350px 660px,rgba(58,40,70,0.500) 0%,rgba(44,34,58,0.280) 55%,rgba(26,27,32,0) 100%),radial-gradient(ellipse 150px 150px at 0px 730px,rgba(40,50,84,0.220) 0%,rgba(26,27,32,0) 100%),linear-gradient(180deg,rgba(44,46,56,0) 0px,rgba(44,46,56,0) 590px,rgba(44,46,56,0.450) 680px,rgba(44,46,56,0.950) 765px,rgba(44,46,56,0.950) 774px),#1a1b20"></div>
<svg class="abs" style="left:1447px;top:230px" width="18" height="18" viewBox="0 0 18 18" ><path d="M9.00 4.68L9.00 0.54" stroke="#fff" stroke-width="1.71" stroke-linecap="round"/><path d="M12.05 5.95L14.98 3.02" stroke="#fff" stroke-width="1.71" stroke-linecap="round"/><path d="M13.32 9.00L17.46 9.00" stroke="#fff" stroke-width="1.71" stroke-linecap="round"/><path d="M8.24 8.24L15.62 15.62" stroke="#fff" stroke-width="2.34" stroke-linecap="round"/><path d="M9.00 13.32L9.00 17.46" stroke="#fff" stroke-width="1.71" stroke-linecap="round"/><path d="M5.95 12.05L3.02 14.98" stroke="#fff" stroke-width="1.71" stroke-linecap="round"/><path d="M4.68 9.00L0.54 9.00" stroke="#fff" stroke-width="1.71" stroke-linecap="round"/><path d="M5.95 5.95L3.02 3.02" stroke="#fff" stroke-width="1.71" stroke-linecap="round"/></svg>
<div class="t" style="left:1477px;top:227.1px;font-size:17.8px;line-height:24.9px;color:#fff;font-weight:700;">AI 助手</div>
<svg class="abs" style="left:1745px;top:229px" width="20" height="20" viewBox="0 0 20 20" ><defs><linearGradient id="hg1" x1="0" y1="0" x2="1" y2="0"><stop offset="0" stop-color="#73adff"/><stop offset="0.550" stop-color="#b7a6e8"/><stop offset="1" stop-color="#ee8fb2"/></linearGradient></defs><path d="M9.500 17.800H1.500V9.300a7.800 7.800 0 0 1 15.600 0v1.600" fill="none" stroke="url(#hg1)" stroke-width="1.500" stroke-linecap="round" stroke-linejoin="round"/><path d="M5.500 8.200h7.500M5.500 12.200h4.500" stroke="#d9d6e6" stroke-width="1.500" stroke-linecap="round"/><path d="M15 12.800v6M12 15.800h6" stroke="#f08aa8" stroke-width="1.500" stroke-linecap="round"/></svg>
<svg class="abs" style="left:1780.5px;top:229px" width="21" height="20" viewBox="0 0 21 20" ><path d="M2 10A8.300 8.300 0 1 1 4.970 16.360" fill="none" stroke="#f0f1f5" stroke-width="1.700" stroke-linecap="round"/><path d="M-0.800 8.300h5.600L2 12.300z" fill="#f0f1f5"/><path d="M10.300 5.500v5h4.200" fill="none" stroke="#f0f1f5" stroke-width="1.800" stroke-linecap="round" stroke-linejoin="round"/></svg>
<svg class="abs" style="left:1819.5px;top:233.5px" width="11" height="11" viewBox="0 0 11 11" ><path d="M1.400 1.400l8.200 8.200M9.600 1.400l-8.200 8.200" stroke="#f4f6fa" stroke-width="2.600"/></svg>
<div class="abs" style="left:1451px;top:292px;width:30px;height:30px;background:#a26bf0;border-radius:15px"></div>
<svg class="abs" style="left:1457px;top:298px" width="18" height="18" viewBox="0 0 18 18" ><path d="M9.00 4.68L9.00 0.54" stroke="#2a1450" stroke-width="1.71" stroke-linecap="round"/><path d="M12.05 5.95L14.98 3.02" stroke="#2a1450" stroke-width="1.71" stroke-linecap="round"/><path d="M13.32 9.00L17.46 9.00" stroke="#2a1450" stroke-width="1.71" stroke-linecap="round"/><path d="M8.24 8.24L15.62 15.62" stroke="#2a1450" stroke-width="2.34" stroke-linecap="round"/><path d="M9.00 13.32L9.00 17.46" stroke="#2a1450" stroke-width="1.71" stroke-linecap="round"/><path d="M5.95 12.05L3.02 14.98" stroke="#2a1450" stroke-width="1.71" stroke-linecap="round"/><path d="M4.68 9.00L0.54 9.00" stroke="#2a1450" stroke-width="1.71" stroke-linecap="round"/><path d="M5.95 5.95L3.02 3.02" stroke="#2a1450" stroke-width="1.71" stroke-linecap="round"/></svg>
<div class="t" style="left:1488px;top:296.5px;font-size:15px;line-height:21.0px;color:#fff;font-weight:700;">AI 助手</div>
<div class="t" style="left:1451px;top:346.6px;font-size:16.2px;line-height:22.7px;color:#e9ebf0;font-weight:400;">以下是一个使用 Python 解决此问题的代码框架</div>
<div class="t" style="left:1451px;top:376.6px;font-size:16.2px;line-height:22.7px;color:#e9ebf0;font-weight:400;">和提示:</div>
<div class="abs" style="left:1451px;top:412px;width:384px;height:406px;background:#282a33;border-radius:6px"></div>
<div class="abs" style="left:1451px;top:455px;width:384px;height:1px;background:#34363f"></div>
<svg class="abs" style="left:1465px;top:427px" width="14" height="14" viewBox="0 0 14 14" ><g fill="none" stroke="#3fb59a" stroke-width="1.150" stroke-linejoin="round"><path d="M6.900 1.200H6A2.400 2.400 0 0 0 3.600 3.600V4.800H7.200V5.600H2.900A1.800 1.800 0 0 0 1.100 7.400V8.600A1.800 1.800 0 0 0 2.900 10.400H3.600V8.700A1.900 1.900 0 0 1 5.500 6.800H8.500A1.900 1.900 0 0 0 10.400 4.900V3.600A2.400 2.400 0 0 0 8 1.200z"/><path d="M6.900 1.200H6A2.400 2.400 0 0 0 3.600 3.600V4.800H7.200V5.600H2.900A1.800 1.800 0 0 0 1.100 7.400V8.600A1.800 1.800 0 0 0 2.900 10.400H3.600V8.700A1.900 1.900 0 0 1 5.500 6.800H8.500A1.900 1.900 0 0 0 10.400 4.900V3.600A2.400 2.400 0 0 0 8 1.200z" transform="rotate(180 7 7)"/></g></svg>
<div class="t" style="left:1484px;top:423.1px;font-size:15.5px;line-height:21.7px;color:#fff;font-weight:700;">python</div>
<svg class="abs" style="left:1720px;top:426px" width="15" height="15" viewBox="0 0 15 15" ><rect x="1" y="4" width="9" height="10" rx="1" fill="none" stroke="#cfd2d9" stroke-width="1.700"/><path d="M5 1.200h8.500V11" fill="none" stroke="#cfd2d9" stroke-width="1.700"/></svg>
<svg class="abs" style="left:1754px;top:426px" width="17" height="15" viewBox="0 0 17 15" ><path d="M1 1.200h15v12.600H1" fill="none" stroke="#cfd2d9" stroke-width="1.800"/><path d="M13.800 2v11" stroke="#cfd2d9" stroke-width="3"/><path d="M1 7.500h8M6.500 4.500l3 3-3 3" fill="none" stroke="#cfd2d9" stroke-width="1.800"/></svg>
<div class="abs" style="left:1787px;top:426px;width:1px;height:15px;background:#3d404b"></div>
<svg class="abs" style="left:1804px;top:424px" width="17" height="19" viewBox="0 0 17 19" ><path d="M5.500 13.500C3.500 12.300 2.300 10.500 2.300 8A5.700 5.700 0 0 1 8 2.300" fill="none" stroke="#4d8dff" stroke-width="1.700" stroke-linecap="round"/><path d="M5.500 13.500v1.800h5v-1.800c1.500-0.900 2.500-2.300 2.900-3.800" fill="none" stroke="#4d8dff" stroke-width="1.700" stroke-linejoin="round"/><path d="M6.300 17.800h3.400" stroke="#4d8dff" stroke-width="1.700" stroke-linecap="round"/><path d="M12.500 0.500l1.200 2.800 2.800 1.200-2.800 1.200-1.200 2.800-1.200-2.800-2.800-1.200 2.800-1.200z" fill="#f0746a"/></svg>
<div class="abs" style="left:1461px;top:717px;width:283px;height:22px;background:#363841;border-radius:3px"></div>
<div class="abs" style="left:1587px;top:695px;width:14px;height:22px;background:#33353e"></div>
<div class="abs" style="left:1610px;top:695px;width:12px;height:22px;background:#33353e;border-radius:2px"></div>
<div class="acl mono" style="left:1461.0px;top:469.8px"><span class="kd">def</span> <span class="fn">solution</span>(<span class="pa">nums</span>, <span class="pa">k</span>):</div>
<div class="acl mono" style="left:1500.0px;top:492.2px"><span class="cm"># <span class="cj">首先创建一个字典来存储每个数字及其出</span></span></div>
<div class="acl mono" style="left:1500.0px;top:514.8px"><span class="cm"><span class="cj">现的频率</span></span></div>
<div class="acl mono" style="left:1500.0px;top:537.2px">frequency_dict = {}</div>
<div class="acl mono" style="left:1500.0px;top:559.8px"><span class="kw">for</span> num <span class="kw">in</span> nums:</div>
<div class="acl mono" style="left:1539.0px;top:582.2px"><span class="kw">if</span> num <span class="kw">in</span> frequency_dict:</div>
<div class="acl mono" style="left:1578.0px;top:604.8px">frequency_dict[num] += <span class="nu">1</span></div>
<div class="acl mono" style="left:1539.0px;top:627.2px"><span class="kw">else</span>:</div>
<div class="acl mono" style="left:1578.0px;top:649.8px">frequency_dict[num] = <span class="nu">1</span></div>
<div class="acl mono" style="left:1500.0px;top:672.2px"><span class="cm"># <span class="cj">接下来，对频率字典进行排序，获取前</span></span></div>
<div class="acl mono" style="left:1500.0px;top:694.8px"><span class="cm">k <span class="cj">个高频元素</span></span></div>
<div class="acl mono" style="left:1500.0px;top:717.2px"><span class="cm"># <span class="cj">这里需要您自己实现排序和获取前</span> k <span class="cj">个</span></span></div>
<div class="acl mono" style="left:1500.0px;top:739.8px"><span class="cm"><span class="cj">元素的逻辑</span></span></div>
<div class="acl mono" style="left:1500.0px;top:762.2px"><span class="kw">return</span> -<span class="nu">2</span>  <span class="cm"># <span class="cj">暂时返回</span> -2<span class="cj">，您需要修</span></span></div>
<div class="acl mono" style="left:1500.0px;top:784.8px"><span class="cm"><span class="cj">改这里</span></span></div>
<div class="acl mono" style="left:1461px;top:717.2px;color:#4a4d58">····</div>
<div class="t" style="left:1451px;top:832.6px;font-size:16.2px;line-height:22.7px;color:#e9ebf0;font-weight:400;">对于这个问题，我们首先理解是要找出给定数组</div>
<div class="abs" style="left:1451px;top:858px;width:400px;height:11px;overflow:hidden"><div class="t" style="left:0;top:4px;font-size:16.2px;line-height:22px;color:#e9ebf0">中出现频率前 <span style="background:#3a3d48;border-radius:4px;padding:0 5px">k</span> 高的元素。这里给出了完成此任</div></div>
<div class="abs" style="left:1441.5px;top:886px;width:403.5px;height:85px;background:linear-gradient(90deg,#3b72ea 0%,#4068d6 40%,#5a6cc4 70%,#9a8cb4 84%,#e6a27c 92%,#c46ae0 97%,#9a4df0 100%);border-radius:9px"></div>
<div class="abs" style="left:1442.7px;top:887.2px;width:401.1px;height:82.6px;background:#191a20;border-radius:8px"></div>
<div class="t" style="left:1455px;top:899.6px;font-size:16.2px;line-height:22.7px;color:#8a8f9c;font-weight:400;">你可以问我问题</div>
<svg class="abs" style="left:1808px;top:936px" width="22" height="20" viewBox="0 0 22 20" ><path d="M21 1L1 10.500l7 2.500z" fill="#5a5d68"/><path d="M21 1L8 13l0.500 6 3-4 5 2z" fill="#4a4d58"/></svg>
<div class="abs" style="left:1868px;top:211px;width:40px;height:70px;background:linear-gradient(180deg,#a4acec 0%,#9da3d8 18%,#b8a4b0 45%,#d3a89c 62%,#b08f9e 85%,#8d7a9e 100%);border-radius:20px"></div>
<div class="abs" style="left:1870px;top:213px;width:36px;height:66px;background:#23252b;border-radius:18px"></div>
<svg class="abs" style="left:0;top:0" width="0" height="0"><defs><linearGradient id="wandg" x1="0" y1="0" x2="1" y2="1"><stop offset="0" stop-color="#fff"/><stop offset="0.500" stop-color="#f6b48a"/><stop offset="1" stop-color="#e47fd0"/></linearGradient></defs></svg>
<svg class="abs" style="left:1878.5px;top:225.5px" width="19" height="19" viewBox="0 0 19 19" ><path d="M9.50 4.94L9.50 0.57" stroke="#f4e8cc" stroke-width="1.80" stroke-linecap="round"/><path d="M12.72 6.28L15.81 3.19" stroke="#f2a46b" stroke-width="1.80" stroke-linecap="round"/><path d="M14.06 9.50L18.43 9.50" stroke="#e88bd2" stroke-width="1.80" stroke-linecap="round"/><path d="M8.69 8.69L16.49 16.49" stroke="url(#wandg)" stroke-width="2.47" stroke-linecap="round"/><path d="M9.50 14.06L9.50 18.43" stroke="#f3d9b0" stroke-width="1.80" stroke-linecap="round"/><path d="M6.28 12.72L3.19 15.81" stroke="#6ea3f2" stroke-width="1.80" stroke-linecap="round"/><path d="M4.94 9.50L0.57 9.50" stroke="#6ea3f2" stroke-width="1.80" stroke-linecap="round"/><path d="M6.28 6.28L3.19 3.19" stroke="#7aa8f0" stroke-width="1.80" stroke-linecap="round"/></svg>
<div class="t" style="left:1879.5px;top:250.2px;font-size:15.5px;line-height:21.7px;color:#fff;font-weight:700;">AI</div>
<svg class="abs" style="left:1877px;top:299px" width="20" height="20" viewBox="0 0 20 20" ><g fill="none" stroke="#c9ccd4" stroke-width="1.600" stroke-linecap="round"><path d="M6.500 6.500a3.500 3.500 0 0 1 7 0z"/><rect x="5.500" y="6.500" width="9" height="11" rx="2"/><path d="M10 9v8.500M2 11.500h3.500M14.500 11.500H18M2.500 6.500l3 2M17.500 6.500l-3 2M2.500 17.500l3-2M17.500 17.500l-3-2M5.500 2.500l1.500 1.500M14.500 2.500L13 4"/></g></svg>
<div class="abs" style="left:1868px;top:937px;width:39px;height:39px;background:#3b3d47;border-radius:8px"></div>
<svg class="abs" style="left:1879px;top:948px" width="17" height="16" viewBox="0 0 17 16" ><rect x="0.900" y="0.900" width="15.200" height="14.200" rx="1" fill="#3b3d47" stroke="#fff" stroke-width="1.800"/><rect x="0" y="9" width="17" height="7" fill="#fff"/></svg>
<div class="abs" style="left:5px;top:984.5px;width:1910px;height:30.5px;background:#3c3f49"></div>
<div class="abs" style="left:45px;top:992px;width:15px;height:15px;background:#9a9ea8;border-radius:8px"></div>
<svg class="abs" style="left:49px;top:996px" width="7" height="7" viewBox="0 0 7 7" ><path d="M0.800 0.800l5.400 5.400M6.200 0.800l-5.400 5.400" stroke="#3c3f49" stroke-width="1.600"/></svg>
<div class="t" style="left:65px;top:989.9px;font-size:14.5px;line-height:20.3px;color:#8a8f9c;font-weight:400;">0</div>
<div class="abs" style="left:78px;top:992px;width:15px;height:15px;background:#9a9ea8;border-radius:8px"></div>
<svg class="abs" style="left:84px;top:995px" width="3" height="10" viewBox="0 0 3 10" ><path d="M1.500 0.500v5.500" stroke="#3c3f49" stroke-width="2"/><circle cx="1.500" cy="8.300" r="1.100" fill="#3c3f49"/></svg>
<div class="t" style="left:99px;top:989.9px;font-size:14.5px;line-height:20.3px;color:#8a8f9c;font-weight:400;">0</div>
<div class="t" style="left:1572px;top:989.9px;font-size:14.5px;line-height:20.3px;color:#868b99;font-weight:400;">行 13，列 5</div>
<div class="t" style="left:1670px;top:989.9px;font-size:14.5px;line-height:20.3px;color:#868b99;font-weight:400;">空格: 4</div>
<div class="t" style="left:1735px;top:989.9px;font-size:14.5px;line-height:20.3px;color:#868b99;font-weight:400;">UTF-8</div>
<div class="t" style="left:1795px;top:989.9px;font-size:14.5px;line-height:20.3px;color:#868b99;font-weight:400;">LF</div>
<div class="t" style="left:1829px;top:989.9px;font-size:14.5px;line-height:20.3px;color:#868b99;font-weight:400;">Python</div>
<div class="abs" style="left:0px;top:1020px;width:1920px;height:60px;background:linear-gradient(90deg,#e3e9de 0%,#ebeee0 6%,#f5eedd 13%,#e6efdc 20%,#d6eedd 27%,#cdece2 40%,#c9ebe3 47%,#d3efdc 58%,#dcf2d6 66%,#e4f1d5 76%,#e9efd6 88%,#efead8 95%,#f2e5d6 100%)"></div>
<svg class="abs" style="left:26px;top:1036px" width="29" height="29" viewBox="0 0 29 29" ><defs><linearGradient id="wl" x1="0" y1="0" x2="1" y2="1"><stop offset="0" stop-color="#5cc8f5"/><stop offset="1" stop-color="#0a78d4"/></linearGradient></defs><rect x="0" y="0" width="13.700" height="13.700" rx="1" fill="url(#wl)"/><rect x="15.300" y="0" width="13.700" height="13.700" rx="1" fill="url(#wl)"/><rect x="0" y="15.300" width="13.700" height="13.700" rx="1" fill="url(#wl)"/><rect x="15.300" y="15.300" width="13.700" height="13.700" rx="1" fill="url(#wl)"/></svg>
<div class="abs" style="left:73px;top:1031px;width:274px;height:38px;background:linear-gradient(90deg,#f6f7ee 0%,#fbf5ea 50%,#f2f3e4 100%);border:1px solid #dfe2d4;border-radius:19px"></div>
<svg class="abs" style="left:86px;top:1041px" width="20" height="20" viewBox="0 0 20 20" ><circle cx="8.200" cy="8.200" r="6.400" fill="none" stroke="#1f1f1f" stroke-width="2"/><path d="M13 13l5 5" stroke="#1f1f1f" stroke-width="2.200" stroke-linecap="round"/></svg>
<div class="t" style="left:118px;top:1037.8px;font-size:17.5px;line-height:24.5px;color:#5a5a5a;font-weight:400;">搜索</div>
<svg class="abs" style="left:283px;top:1033px" width="58" height="34" viewBox="0 0 58 34" ><ellipse cx="29" cy="29.500" rx="28" ry="4" fill="#5a9e2a"/><ellipse cx="29" cy="28.500" rx="25" ry="3" fill="#7cc142"/><path d="M17 5c5-1.500 10 1 14 5 5 2 9 5 11 10 1 3 1 7 0.500 10.500h-5l-1.500-7c-2.500 0.800-5.500 0.800-8.500 0l-1.500 2-1 5h-4.500l0.500-8-3 1.500-1 6.500h-4.500l0.500-9c-1.500-2.500-2-5-1.500-8z" fill="#5b586d"/><ellipse cx="13.500" cy="9.500" rx="6.500" ry="7.500" fill="#666379"/><path d="M9 8c1-2.500 5-3 7-1 1.500 2 1 5.500-0.500 7.500-2 1.500-4.500 1-5.500-0.500-1-2-1.500-4-1-6z" fill="#8f8ca2"/><circle cx="11" cy="9" r="0.900" fill="#1f1f2a"/><circle cx="15" cy="9" r="0.900" fill="#1f1f2a"/><path d="M26 12c4 0 9 2 12 5l-2 2c-3-2.500-7-3.500-11-3z" fill="#77748b"/><path d="M44 25l3-4M47 26l2-2" stroke="#6aa832" stroke-width="1"/></svg>
<div class="abs" style="left:362px;top:1045px;width:23px;height:19px;background:#2b2b2b;border-radius:3px"></div>
<div class="abs" style="left:369px;top:1036px;width:23px;height:21px;background:linear-gradient(135deg,#fdfdfd,#cfcfcf);border-radius:3px;opacity:0.920"></div>
<div class="abs" style="left:419px;top:1037px;width:27px;height:27px;background:linear-gradient(135deg,#fe2b71 0%,#8a3df2 40%,#2a7df5 75%,#2ab3f5 100%);border-radius:1px"></div>
<div class="abs" style="left:422px;top:1040px;width:21px;height:21px;background:#0c0c14"></div>
<div class="t" style="left:424.5px;top:1040.2px;font-size:10.5px;line-height:14.7px;color:#fff;font-weight:700;letter-spacing:0.5px">IJ</div>
<div class="abs" style="left:425px;top:1056px;width:8px;height:1.5px;background:#fff"></div>
<div class="abs" style="left:428.0px;top:1070.5px;width:8px;height:3.5px;background:#7a9484;border-radius:2px"></div>
<svg class="abs" style="left:472px;top:1037px" width="31" height="27" viewBox="0 0 31 27" ><path d="M0 3a2 2 0 0 1 2-2h8l3 3h16a2 2 0 0 1 2 2v4H0z" fill="#e8a317"/><rect x="0" y="5" width="31" height="21" rx="2" fill="#ffcf48"/><path d="M6 26v-5a3 3 0 0 1 3-3h13a3 3 0 0 1 3 3v5z" fill="#1a78d6"/><rect x="10" y="20.500" width="11" height="2.200" rx="1" fill="#0e5cae"/></svg>
<div class="abs" style="left:483.0px;top:1070.5px;width:8px;height:3.5px;background:#7a9484;border-radius:2px"></div>
<div class="abs" style="left:529px;top:1037px;width:27px;height:27px;background:linear-gradient(135deg,#21d789 0%,#a8e035 45%,#fcf84a 100%);border-radius:1px"></div>
<div class="abs" style="left:532px;top:1040px;width:21px;height:21px;background:#0c140c"></div>
<div class="t" style="left:534px;top:1040.2px;font-size:10.5px;line-height:14.7px;color:#fff;font-weight:700;letter-spacing:0.2px">PC</div>
<div class="abs" style="left:535px;top:1056px;width:8px;height:1.5px;background:#fff"></div>
<div class="abs" style="left:538.0px;top:1070.5px;width:8px;height:3.5px;background:#7a9484;border-radius:2px"></div>
<div class="abs" style="left:572px;top:1025px;width:50px;height:50px;background:#f0b3b3;border-radius:5px"></div>
<svg class="abs" style="left:582px;top:1034px" width="31" height="32" viewBox="0 0 31 32" ><defs><linearGradient id="g360" x1="0" y1="0" x2="0" y2="1"><stop offset="0" stop-color="#8fdc3c"/><stop offset="1" stop-color="#3fa516"/></linearGradient></defs><circle cx="15.500" cy="16.500" r="12.800" fill="#f7fbf2"/><path d="M8.200 16.800h14.600a7.400 7.400 0 1 0-2.400 5.500" fill="none" stroke="url(#g360)" stroke-width="4.300"/><path d="M3.500 27c-1.500-3 3-10 10-16s13-9 15-7.500" fill="none" stroke="#6cc82a" stroke-width="1.800" stroke-linecap="round"/><path d="M4 26.500c1 1 3.500 0.500 6-0.800" fill="none" stroke="#6cc82a" stroke-width="1.600" stroke-linecap="round"/></svg>
<div class="abs" style="left:593.0px;top:1070.5px;width:8px;height:3.5px;background:#e02020;border-radius:2px"></div>
<svg class="abs" style="left:637px;top:1035px" width="31" height="31" viewBox="0 0 31 31" ><defs><linearGradient id="eg1" x1="0" y1="0.200" x2="1" y2="0"><stop offset="0" stop-color="#1a9fe6"/><stop offset="0.550" stop-color="#35c4b0"/><stop offset="1" stop-color="#74d552"/></linearGradient><linearGradient id="eg2" x1="0" y1="0" x2="1" y2="1"><stop offset="0" stop-color="#1b8fe0"/><stop offset="1" stop-color="#0b4f9e"/></linearGradient></defs><circle cx="15.500" cy="15.500" r="15" fill="url(#eg1)"/><path d="M0.600 14.500c4-3.500 11-4.500 14.500-1.500-2.500 2.500-2 7 1.500 9.500 3.500 2.500 9 2 12.500-1.500-2 5.500-7.500 9.500-13.600 9.500C7 30.500 0.500 24 0.600 14.500z" fill="url(#eg2)"/><path d="M6 15c3-2.500 7.500-2.800 9.500-1.500-2.500 2.500-2.300 6.500 0.500 9-4 1-8.500-1.500-10-7.500z" fill="#1565b8" opacity="0.700"/><path d="M15.500 13c1.500-2 5-2.500 7.500-1 2.500 1.500 3.500 4.500 2.500 6.500-1 1.800-4 2.500-6.500 1.500 1.500-0.800 2.200-2.500 1.500-4.200-0.800-1.800-2.800-2.800-5-2.800z" fill="#eef8fb"/></svg>
<div class="abs" style="left:648.0px;top:1070.5px;width:8px;height:3.5px;background:#7a9484;border-radius:2px"></div>
<svg class="abs" style="left:692px;top:1035px" width="31" height="31" viewBox="0 0 31 31" ><path d="M1.500 11.200L4.300 9 22.500 23.500v6.300z" fill="#0f6fc0"/><path d="M1.500 19.800L4.300 22 22.500 7.500V1.200z" fill="#1a86dc"/><path d="M22 1.200L8.300 15.500 22 29.800V22.300l-8-6.800 8-6.800z" fill="#1880d6"/><path d="M22 1.200l7.700 3.600v21.400L22 29.800z" fill="#2ba6f4"/></svg>
<div class="abs" style="left:703.0px;top:1070.5px;width:8px;height:3.5px;background:#7a9484;border-radius:2px"></div>
<div class="abs" style="left:738px;top:1026px;width:48px;height:48px;background:rgba(255,255,255,0.550);border-radius:5px"></div>
<svg class="abs" style="left:747px;top:1035px" width="30" height="30" viewBox="0 0 30 30" ><circle cx="15" cy="15" r="14.500" fill="#fff"/><path d="M15 .500A14.500 14.500 0 0 1 27.560 7.750H15a7.250 7.250 0 0 0-6.280 3.630L2.440 7.750A14.500 14.500 0 0 1 15 .500z" fill="#ea4335"/><path d="M27.560 7.750A14.500 14.500 0 0 1 15 29.500l6.280-10.880A7.250 7.250 0 0 0 21.280 11.380z" fill="#fbbc04"/><path d="M27.560 7.750H15a7.250 7.250 0 0 1 6.280 3.630z" fill="#fbbc04"/><path d="M15 29.500A14.500 14.500 0 0 1 2.440 7.750l6.280 10.870A7.250 7.250 0 0 0 15 22.250a7.250 7.250 0 0 0 6.280-3.630z" fill="#34a853"/><circle cx="15" cy="15" r="6.800" fill="#fff"/><circle cx="15" cy="15" r="5.500" fill="#4285f4"/></svg>
<div class="abs" style="left:752px;top:1071px;width:20px;height:3.5px;background:#1a78d6;border-radius:2px"></div>
<svg class="abs" style="left:802px;top:1035px" width="31" height="31" viewBox="0 0 31 31" ><defs><linearGradient id="nvg" x1="0" y1="0" x2="1" y2="1"><stop offset="0" stop-color="#f3dc8a"/><stop offset="0.500" stop-color="#e3bd4e"/><stop offset="1" stop-color="#f1d680"/></linearGradient></defs><g fill="none" stroke="url(#nvg)" stroke-width="2.400"><ellipse cx="9.500" cy="9" rx="5.200" ry="6.800" transform="rotate(-28 9.500 9)"/><ellipse cx="21.500" cy="9" rx="5.200" ry="6.800" transform="rotate(28 21.500 9)"/><ellipse cx="15.500" cy="20" rx="10" ry="8.800"/></g></svg>
<div class="abs" style="left:813.0px;top:1070.5px;width:8px;height:3.5px;background:#7a9484;border-radius:2px"></div>
<div class="abs" style="left:857px;top:1035px;width:30px;height:30px;background:linear-gradient(180deg,#f5505a,#e8303e);border-radius:6px"></div>
<svg class="abs" style="left:865px;top:1040px" width="14" height="6" viewBox="0 0 14 6" ><path d="M1 1c1.500 4 10.500 4 12 0" fill="none" stroke="#fff" stroke-width="1.500" stroke-linecap="round"/></svg>
<div class="t" style="left:859.5px;top:1048.0px;font-size:5.8px;line-height:8.1px;color:#fff;font-weight:700;letter-spacing:0.1px">HUAWEI</div>
<div class="abs" style="left:915px;top:1038px;width:25px;height:24px;background:#0a0a0a;border-radius:6px"></div>
<svg class="abs" style="left:919px;top:1041px" width="17" height="18" viewBox="0 0 17 18" ><path d="M8.500 1L16 4.500 8.500 8 1 4.500z" fill="#e8e8e8"/><path d="M1 5.500l7 3.300V17L1 13.500z" fill="#9a9a9a"/><path d="M16 5.500l-7 3.300V17l7-3.500z" fill="#5a5a5a"/></svg>
<div class="abs" style="left:923.0px;top:1070.5px;width:8px;height:3.5px;background:#7a9484;border-radius:2px"></div>
<svg class="abs" style="left:967px;top:1035px" width="30" height="32" viewBox="0 0 30 32" ><path d="M5 8c-3 1-4.500 6-3 12 1.500 1.500 3 1 4-1.500zM25 8c3 1 4.500 6 3 12-1.500 1.500-3 1-4-1.500z" fill="#c46e12" stroke="#2a1a0a" stroke-width="1"/><ellipse cx="15" cy="13.500" rx="10.500" ry="11.500" fill="#f3a22c" stroke="#2a1a0a" stroke-width="1.200"/><ellipse cx="15" cy="19" rx="5.500" ry="4.800" fill="#f9cc85"/><circle cx="10.800" cy="12.500" r="1.500" fill="#2a1a0a"/><circle cx="19.200" cy="12.500" r="1.500" fill="#2a1a0a"/><ellipse cx="15" cy="17" rx="2.300" ry="1.600" fill="#2a1a0a"/><path d="M12.500 21.500h5c0 4-0.800 7-2.500 7s-2.500-3-2.500-7z" fill="#f0435f" stroke="#2a1a0a" stroke-width="0.900"/></svg>
<div class="abs" style="left:978.0px;top:1070.5px;width:8px;height:3.5px;background:#7a9484;border-radius:2px"></div>
<svg class="abs" style="left:1021px;top:1039px" width="33" height="23" viewBox="0 0 33 23" ><path d="M2.500 2.500L8.500 19.500 16.500 6 24.500 19.500 30.500 2.500" fill="none" stroke="#e8341e" stroke-width="5.200" stroke-linejoin="miter" stroke-miterlimit="6"/><path d="M0 0h10l1.500 4H1.500zM23 0h10l-1.500 4H21.500z" fill="#e8341e"/><path d="M5 4l4 11.500M28 4l-4 11.500" stroke="#ff7a5c" stroke-width="1.200" fill="none"/></svg>
<div class="abs" style="left:1033.0px;top:1070.5px;width:8px;height:3.5px;background:#7a9484;border-radius:2px"></div>
<div class="abs" style="left:1078px;top:1036px;width:28px;height:28px;background:linear-gradient(160deg,#2a9df5,#0a62e8);border-radius:6px"></div>
<svg class="abs" style="left:1083px;top:1040px" width="18" height="20" viewBox="0 0 18 20" ><path d="M2 2c5 1 10 3 14 7-1.500 0.800-2.500 1.200-4 1.500 1 0.800 2 1.200 3 1.500-1.500 1.500-3 2.300-5 2.800L9 19l-2-3.500C4.500 13 2.500 8 2 2z" fill="#fff"/><path d="M4 5c3 1 6 2.500 9 5M5 8.500c2.500 1 5 2.300 7 4" fill="none" stroke="#2a8af5" stroke-width="1"/></svg>
<div class="abs" style="left:1088.0px;top:1070.5px;width:8px;height:3.5px;background:#7a9484;border-radius:2px"></div>
<svg class="abs" style="left:1130px;top:1037px" width="31" height="27" viewBox="0 0 31 27" ><ellipse cx="11.500" cy="10" rx="10.500" ry="9" fill="#2dc84d"/><path d="M5 17l-1 4 4.500-2.500z" fill="#2dc84d"/><circle cx="8" cy="7.500" r="1.300" fill="#1a8a33"/><circle cx="14.500" cy="7.500" r="1.300" fill="#1a8a33"/><ellipse cx="21.500" cy="17.500" rx="8.500" ry="7.300" fill="#eef0ee"/><path d="M26 23.500l1 3-3.500-2z" fill="#eef0ee"/><circle cx="18.700" cy="15.500" r="1.100" fill="#8a8f8a"/><circle cx="24.300" cy="15.500" r="1.100" fill="#8a8f8a"/></svg>
<div class="abs" style="left:1141.0px;top:1070.5px;width:8px;height:3.5px;background:#7a9484;border-radius:2px"></div>
<div class="abs" style="left:1177px;top:1025px;width:50px;height:50px;background:#f0b3b3;border-radius:5px"></div>
<svg class="abs" style="left:1187px;top:1035px" width="30" height="31" viewBox="0 0 30 31" ><path d="M15 1.500a13.500 13.500 0 0 1 8.500 24l-3-6.500a7 7 0 1 0-11 0l-3 6.500A13.500 13.500 0 0 1 15 1.500z" fill="#f0862a"/><circle cx="15" cy="15" r="4.300" fill="#1a3a6a"/><path d="M13.200 16h3.600l1.700 14h-7z" fill="#1a3a6a"/></svg>
<div class="abs" style="left:1198.0px;top:1070.5px;width:8px;height:3.5px;background:#e02020;border-radius:2px"></div>
<svg class="abs" style="left:1422px;top:1043px" width="32" height="22" viewBox="0 0 32 22" ><circle cx="22" cy="8" r="5" fill="#f5a623"/><path d="M8 21a6.500 6.500 0 0 1-0.500-13 8 8 0 0 1 15 2 5.500 5.500 0 0 1 1 11z" fill="#a9c6ee"/><path d="M8 21a6.500 6.500 0 0 1-0.500-13 8 8 0 0 1 15 2 5.500 5.500 0 0 1 1 11z" fill="none" stroke="#8eb0e2" stroke-width="0.800"/></svg>
<div class="abs" style="left:1435px;top:1031px;width:28px;height:16px;background:#fbfbf6;border-radius:8px"></div>
<div class="t" style="left:1439px;top:1029.9px;font-size:13px;line-height:18.2px;color:#1f1f1f;font-weight:400;">31°</div>
<svg class="abs" style="left:1492px;top:1044px" width="15" height="9" viewBox="0 0 15 9" ><path d="M1.200 7.800L7.500 1.500l6.300 6.300" fill="none" stroke="#1f1f1f" stroke-width="1.600"/></svg>
<div class="t" style="left:1528.5px;top:1040.5px;font-size:15px;line-height:21.0px;color:#111;font-weight:700;letter-spacing:-0.8px">IMI</div>
<svg class="abs" style="left:1567px;top:1039px" width="24" height="24" viewBox="0 0 24 24" ><path d="M9 1l8 2.500v7c0 5-3.500 9-8 11-4.500-2-8-6-8-11v-7z" fill="#1a8ae8"/><path d="M9 1v20.500c-4.500-2-8-6-8-11v-7z" fill="#46b1f5"/><path d="M17 11l6.500 11.500h-13z" fill="#f5c211" stroke="#8a6a00" stroke-width="0.500"/><path d="M17 15v4" stroke="#1f1f1f" stroke-width="1.400"/><circle cx="17" cy="20.800" r="0.800" fill="#1f1f1f"/></svg>
<div class="t" style="left:1608px;top:1039.8px;font-size:16px;line-height:22.4px;color:#1f1f1f;font-weight:400;">中</div>
<div class="t" style="left:1657px;top:1039.8px;font-size:16px;line-height:22.4px;color:#1f1f1f;font-weight:400;">拼</div>
<svg class="abs" style="left:1704px;top:1042px" width="20" height="16" viewBox="0 0 20 16" ><g fill="none" stroke="#1f1f1f" stroke-width="1.600" stroke-linecap="round"><path d="M1.500 6a12 12 0 0 1 17 0"/><path d="M4.500 9.300a7.700 7.700 0 0 1 11 0"/><path d="M7.500 12.500a3.500 3.500 0 0 1 5 0"/></g><circle cx="10" cy="14.800" r="1.300" fill="#1f1f1f"/></svg>
<svg class="abs" style="left:1735px;top:1042px" width="20" height="16" viewBox="0 0 20 16" ><path d="M1 5.500h3.500L9 1.500v13l-4.500-4H1z" fill="none" stroke="#1f1f1f" stroke-width="1.500" stroke-linejoin="round"/><path d="M12 5a4.500 4.500 0 0 1 0 6M14.500 2.500a8 8 0 0 1 0 11" fill="none" stroke="#8a8a8a" stroke-width="1.300" stroke-linecap="round"/></svg>
<svg class="abs" style="left:1764px;top:1043px" width="24" height="14" viewBox="0 0 24 14" ><rect x="1" y="1" width="19" height="12" rx="2.500" fill="none" stroke="#1f1f1f" stroke-width="1.500"/><rect x="3" y="3" width="15" height="8" rx="1" fill="#1f1f1f"/><path d="M22 5v4" stroke="#1f1f1f" stroke-width="1.800" stroke-linecap="round"/><path d="M6 0l4 3-4 0z" fill="#1f1f1f"/></svg>
<div class="t" style="left:1815px;top:1028.8px;font-size:14.5px;line-height:20.3px;color:#1f1f1f;font-weight:400;">16:59</div>
<div class="t" style="left:1805px;top:1049.8px;font-size:14.5px;line-height:20.3px;color:#1f1f1f;font-weight:400;">2024/9/1</div>
<svg class="abs" style="left:1878px;top:1039px" width="17" height="20" viewBox="0 0 17 20" ><path d="M8.500 1.500a5 5 0 0 1 5 5v4.500l1.800 3H1.700l1.800-3V6.500a5 5 0 0 1 5-5z" fill="#1f1f1f"/><path d="M6.500 16.500h4" stroke="#1f1f1f" stroke-width="1.800" stroke-linecap="round"/><text x="9" y="11" font-size="7" fill="#fff" text-anchor="middle" font-family="Liberation Sans,sans-serif">z</text></svg>
<div class="t" style="left:1577px;top:1024px;font-size:23px;line-height:28px;color:#fff;font-weight:400;letter-spacing:1.3px;-webkit-text-stroke:0.5px #4a4a4a;text-shadow:0.6px 0.6px 0.5px rgba(60,60,60,0.800)">掘金技术社区 @ 神经蛙1669</div>
</div>
</body></html>
